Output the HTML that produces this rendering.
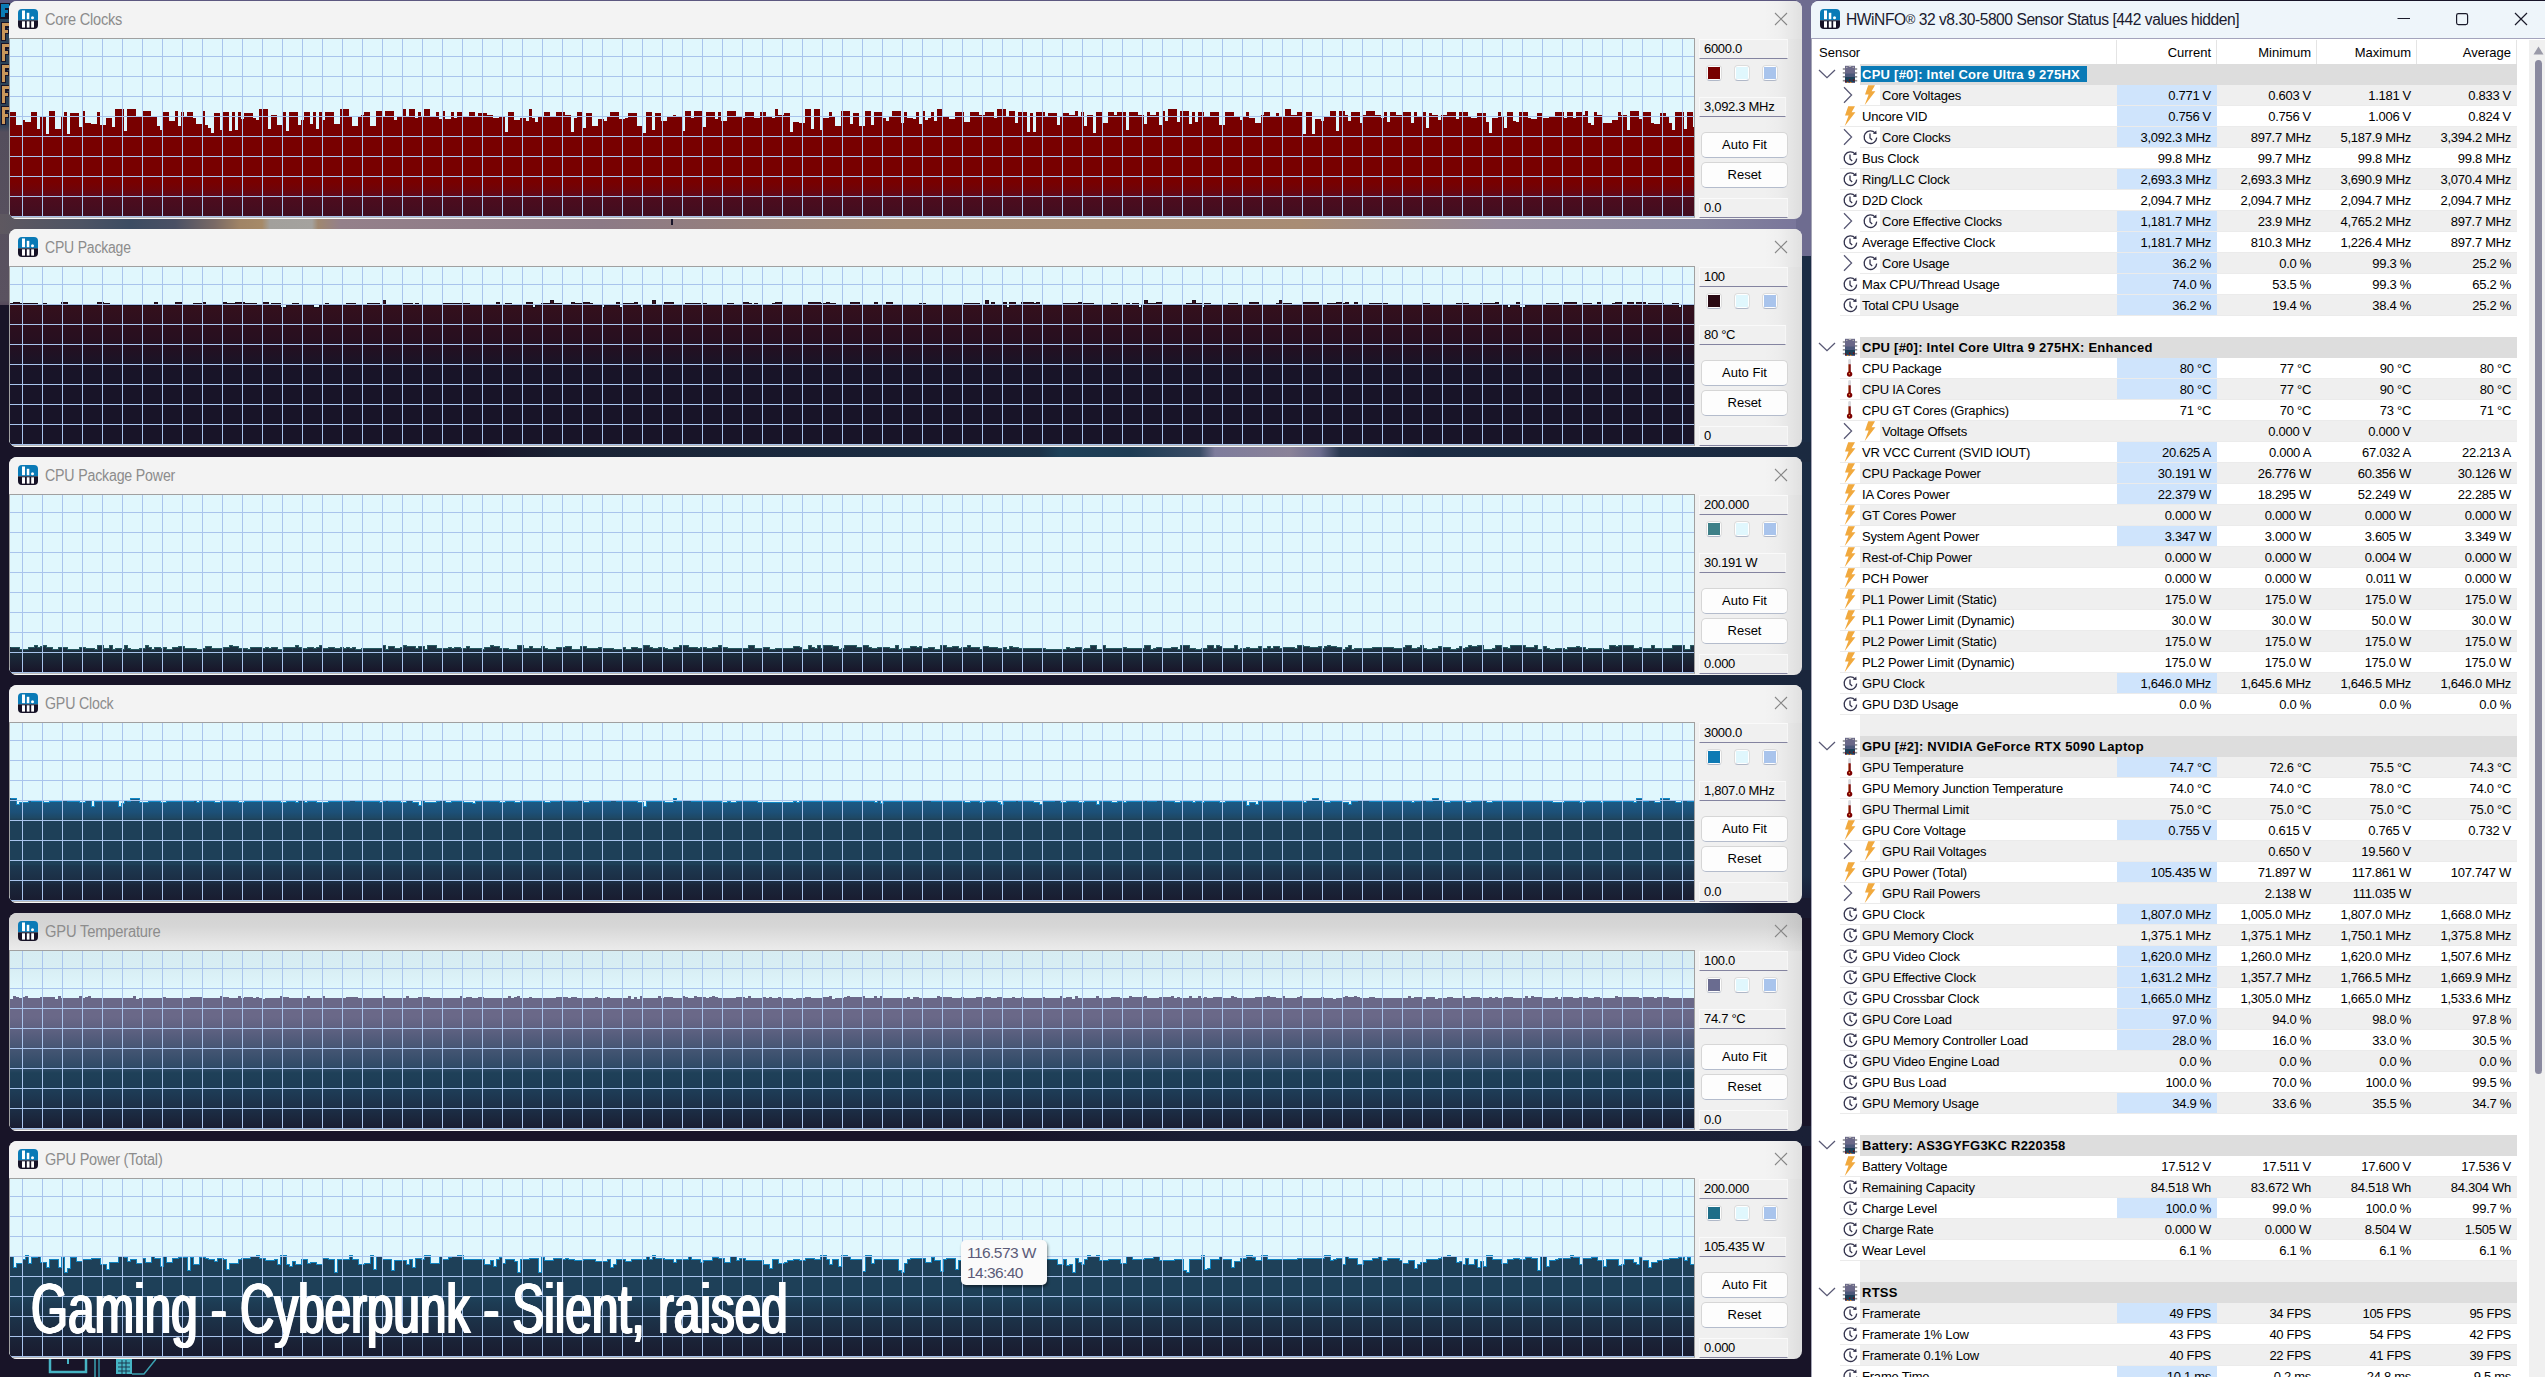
<!DOCTYPE html><html><head><meta charset="utf-8"><title>HWiNFO</title><style>
*{box-sizing:border-box;margin:0;padding:0}
html,body{width:2545px;height:1377px;overflow:hidden;background:#181428}
body{position:relative;font-family:"Liberation Sans",sans-serif;font-size:13px;color:#000}
.abs{position:absolute}
.pn{position:absolute;left:9px;width:1793px;height:218px;border-radius:8px;overflow:hidden;background:#f0f0f0}
.pn .tb{position:absolute;left:0;top:0;width:100%;height:38px;background:#f3f3f3}
.pn .tt{position:absolute;left:36px;top:9px;font-size:16px;line-height:20px;color:#8c8c8c;white-space:nowrap;letter-spacing:-0.2px}
.pn .ic{position:absolute;left:9px;top:8px}
.pn .cx{position:absolute;left:1765px;top:11px}
.pn .ch{position:absolute;left:0;top:37px;width:1686px;height:180px;border:1px solid #a0a0a0;border-bottom-color:#b8b8b8;background:#e0f7fd}
.pn .ch svg{position:absolute;left:0;top:0}
.pn .wl{position:absolute;left:0;top:217px;width:1700px;height:1px;background:#f8f8f8}
.pn .sh{position:absolute;left:1755px;top:0;width:38px;height:218px;background:linear-gradient(90deg,rgba(0,0,0,0) 0%,rgba(0,0,0,0.015) 40%,rgba(0,0,0,0.05) 75%,rgba(0,0,0,0.08) 100%)}
.eb{position:absolute;left:1690px;width:89px;height:20px;background:#f0f0f0;border-top:1px solid #fafafa;border-left:1px solid #f8f8f8;border-right:1px solid #f6f6f6;border-bottom:1px solid #8484a0;font-size:13px;line-height:18px;padding-left:4px;white-space:nowrap;color:#000;letter-spacing:-0.3px}
.eb.v{width:87px}
.bt{position:absolute;left:1692px;width:87px;height:26px;background:#fdfdfd;border:1px solid #d6d6d6;border-bottom-color:#b4bccc;border-radius:5px;font-size:13px;line-height:24px;text-align:center;color:#000}
.sw{position:absolute;top:64px;width:16px;height:16px;background:#fff;border:1px solid #dcdcdc;border-bottom-color:#b0b8c8;border-radius:4px}
.sw i{position:absolute;left:1px;top:1px;width:12px;height:12px;display:block}


.hw{position:absolute;left:1811px;top:1px;width:760px;height:1400px;background:#fff;border-radius:8px 0 0 0;overflow:hidden}
.hw .tb{position:absolute;left:0;top:0;width:100%;height:37px;background:#eef5fa}
.hw .tl{position:absolute;left:0;top:37px;width:100%;height:1px;background:#a4a4bc}
.hw .tt{position:absolute;left:35px;top:9px;font-size:15.6px;line-height:20px;color:#1a1a2e;white-space:nowrap;letter-spacing:-0.45px}
.hw .ic{position:absolute;left:9px;top:8px}
.hd{position:absolute;top:42px;height:20px;line-height:20px;font-size:13px;white-space:nowrap}
.hs{position:absolute;top:39px;width:1px;height:24px;background:#e4e4e4}
.r{position:absolute;left:0;width:706px;height:21px}
.r .bg{position:absolute;top:0;height:20px;right:0}
.r .ln{position:absolute;top:20px;height:1px;right:0;background:#ebebeb}
.r .nm{position:absolute;top:0;height:20px;line-height:22px;white-space:nowrap;letter-spacing:-0.2px}
.r .c{position:absolute;top:0;width:100px;height:20px;line-height:22px;text-align:right;padding-right:6px;white-space:nowrap;letter-spacing:-0.3px}
.r .c.hl{background:#cfe4fc}
.r svg{position:absolute}
.g .nm{font-weight:bold;letter-spacing:0.25px}

</style></head><body>
<div class="abs" style="left:0;top:0;width:12px;height:305px;background:linear-gradient(180deg,#2a4258 0,#2c4258 124px,#544e5c 132px,#5a5260 300px,#54485a 305px)"></div><svg class="abs" style="left:0;top:0" width="10" height="128" viewBox="0 0 10 128" shape-rendering="crispEdges"><rect x="0" y="2" width="10" height="17" fill="#161226"/><path d="M1,4H9V8H5V10H8V13H5V17H1Z" fill="#0a7ab6"/><path d="M1,22H10V28H7V29H10V34H6V41H1Z" fill="#181428"/><path d="M2,23H9V26H5V30H8V33H5V40H2Z" fill="#c8965a"/><path d="M1,43H10V49H7V50H10V55H6V62H1Z" fill="#181428"/><path d="M2,44H9V47H5V51H8V54H5V61H2Z" fill="#c8965a"/><path d="M1,64H10V70H7V71H10V76H6V83H1Z" fill="#181428"/><path d="M2,65H9V68H5V72H8V75H5V82H2Z" fill="#c8965a"/><path d="M1,85H10V91H7V92H10V97H6V104H1Z" fill="#181428"/><path d="M2,86H9V89H5V93H8V96H5V103H2Z" fill="#c8965a"/><path d="M1,106H10V112H7V113H10V118H6V125H1Z" fill="#181428"/><path d="M2,107H9V110H5V114H8V117H5V124H2Z" fill="#c8965a"/></svg><div class="abs" style="left:0;top:0;width:1830px;height:3px;background:#5c5880"></div><div class="abs" style="left:0;top:214px;width:1812px;height:20px;background:linear-gradient(90deg,#5e5860 0,#4e5464 80px,#3c4c62 130px,#4a5064 175px,#7a6a66 215px,#a08466 240px,#a68a68 262px,#a2a09c 270px,#a4a29e 312px,#a08870 318px,#94808a 340px,#8c7a86 600px,#a08672 900px,#a88c74 1300px,#94889a 1500px,#86849e 1700px,#77749a 1812px)"></div><div class="abs" style="left:671px;top:219px;width:2px;height:6px;background:#181428"></div><div class="abs" style="left:1796px;top:0;width:20px;height:256px;background:#6e6c90"></div><div class="abs" style="left:1796px;top:256px;width:20px;height:1000px;background:linear-gradient(180deg,#1a2c44 0,#1b2c44 620px,#19203a 640px,#181428 660px)"></div><div class="abs" style="left:0;top:442px;width:1812px;height:20px;background:linear-gradient(90deg,#181428 0,#181428 480px,#1a2234 560px,#1b2c42 900px,#1c3248 1040px,#1e4058 1060px,#1e3c54 1130px,#3a4c66 1200px,#7e7c9c 1215px,#8a8298 1290px,#6c6c8e 1320px,#2a3850 1340px,#1c2c44 1420px,#1b2a40 1812px)"></div><div class="abs" style="left:0;top:670px;width:1812px;height:20px;background:linear-gradient(90deg,#181428 0,#181428 900px,#19182e 1100px,#1a2238 1400px,#1a263c 1812px)"></div><div class="abs" style="left:0;top:898px;width:1812px;height:20px;background:linear-gradient(90deg,#181428 0,#181428 580px,#19203a 700px,#1b2a40 900px,#1b2a42 1700px,#191a30 1760px)"></div><div class="abs" style="left:0;top:1126px;width:1812px;height:20px;background:linear-gradient(90deg,#181428 0,#181428 1000px,#191e34 1200px,#1a2036 1812px)"></div><svg class="abs" style="left:40px;top:1356px" width="130" height="21" viewBox="0 0 130 21"><path d="M10,3V16H46V3" fill="none" stroke="#46b4c4" stroke-width="2.5"/><path d="M28,3V8" stroke="#46b4c4" stroke-width="2"/><path d="M55,3V21" stroke="#3aa0b0" stroke-width="1.5"/><path d="M59,3V21" stroke="#2a7084" stroke-width="2"/><rect x="76" y="3" width="16" height="15" fill="#46b4c4"/><path d="M78,7H90M78,11H90M78,15H90M82,4V18M86,4V18" stroke="#1a3a50" stroke-width="1"/><path d="M92,18H104L116,3" fill="none" stroke="#3aa0b0" stroke-width="1.5"/></svg>
<div class="pn" style="top:1px"><div class="tb"></div><div class="ic"><svg width="20" height="20" viewBox="0 0 20 20"><defs><clipPath id="hwc"><rect x="0" y="0" width="20" height="20" rx="4" ry="4"/></clipPath></defs><g clip-path="url(#hwc)"><rect width="20" height="11.3" fill="#0a7ab6"/><rect y="11.3" width="20" height="8.7" fill="#161226"/></g><rect x="4" y="1.5" width="3" height="8.7" fill="#fff"/><rect x="8.8" y="3.8" width="2.5" height="6.4" fill="#fff"/><circle cx="14.5" cy="8.7" r="1.5" fill="#fff"/><rect x="4" y="12.3" width="3" height="6.3" fill="#fff"/><rect x="8.8" y="12.3" width="2.7" height="6.3" fill="#fff"/><rect x="13.2" y="12.3" width="2.8" height="6.3" fill="#fff"/></svg></div><div class="tt"><span style="display:inline-block;transform-origin:0 50%;transform:scaleX(0.9086)">Core Clocks</span></div><svg class="cx" width="14" height="14" viewBox="0 0 14 14"><path d="M1,1L13,13M13,1L1,13" stroke="#8a8a8a" stroke-width="1.1" fill="none"/></svg><div class="ch"><svg width="1684" height="178" viewBox="0 0 1684 178" shape-rendering="crispEdges"><defs><linearGradient id="g0" gradientUnits="userSpaceOnUse" x1="0" y1="0" x2="0" y2="178"><stop offset="0.0000" stop-color="#780000"/><stop offset="0.8034" stop-color="#780000"/><stop offset="0.8427" stop-color="#700308"/><stop offset="0.8820" stop-color="#62081a"/><stop offset="0.8989" stop-color="#4c0c1e"/><stop offset="1.0000" stop-color="#400e20"/></linearGradient></defs><path d="M0,178V73H3V73H6V86H9V86H12V81H15V83H18V83H21V73H24V73H27V90H30V78H33V78H36V95H39V72H42V72H45V90H48V90H51V77H54V73H57V95H60V74H63V74H66V74H69V88H72V72H75V84H78V84H81V85H84V85H87V73H90V86H93V86H96V79H99V79H102V88H105V70H108V70H111V70H114V92H117V70H120V70H123V70H126V77H129V77H132V72H135V72H138V72H141V78H144V78H147V87H150V91H153V73H156V73H159V82H162V82H165V72H168V87H171V73H174V77H177V73H180V73H183V79H186V85H189V85H192V72H195V86H198V89H201V94H204V74H207V74H210V91H213V73H216V73H219V92H222V73H225V91H228V73H231V80H234V74H237V74H240V74H243V79H246V81H249V70H252V70H255V70H258V90H261V76H264V76H267V86H270V86H273V73H276V92H279V73H282V73H285V73H288V86H291V81H294V73H297V73H300V85H303V73H306V90H309V73H312V81H315V73H318V73H321V73H324V85H327V85H330V70H333V70H336V70H339V78H342V87H345V87H348V78H351V76H354V73H357V73H360V87H363V87H366V72H369V72H372V78H375V72H378V72H381V72H384V81H387V77H390V77H393V70H396V78H399V70H402V70H405V79H408V73H411V77H414V70H417V70H420V77H423V77H426V73H429V80H432V72H435V80H438V80H441V73H444V79H447V73H450V73H453V77H456V77H459V73H462V73H465V78H468V74H471V74H474V74H477V76H480V76H483V79H486V79H489V77H492V77H495V93H498V73H501V73H504V81H507V81H510V79H513V79H516V82H519V70H522V79H525V83H528V78H531V78H534V73H537V73H540V78H543V78H546V73H549V73H552V73H555V76H558V76H561V93H564V79H567V73H570V73H573V89H576V74H579V74H582V87H585V87H588V80H591V80H594V82H597V77H600V73H603V73H606V73H609V80H612V80H615V79H618V74H621V74H624V74H627V87H630V87H633V94H636V73H639V73H642V91H645V74H648V74H651V82H654V82H657V78H660V78H663V76H666V77H669V77H672V92H675V72H678V72H681V79H684V72H687V72H690V72H693V88H696V73H699V73H702V73H705V80H708V73H711V82H714V82H717V72H720V72H723V72H726V78H729V78H732V79H735V73H738V73H741V73H744V79H747V79H750V73H753V73H756V78H759V78H762V79H765V70H768V76H771V76H774V74H777V74H780V93H783V83H786V83H789V84H792V84H795V70H798V70H801V90H804V70H807V70H810V91H813V79H816V79H819V73H822V77H825V87H828V87H831V72H834V72H837V72H840V85H843V74H846V74H849V87H852V87H855V72H858V72H861V86H864V73H867V73H870V73H873V79H876V82H879V77H882V72H885V72H888V72H891V84H894V73H897V79H900V79H903V80H906V73H909V85H912V72H915V81H918V79H921V73H924V82H927V70H930V70H933V78H936V78H939V80H942V80H945V73H948V73H951V73H954V83H957V83H960V73H963V73H966V73H969V76H972V76H975V73H978V73H981V73H984V79H987V70H990V70H993V70H996V77H999V72H1002V72H1005V84H1008V73H1011V73H1014V73H1017V93H1020V74H1023V93H1026V73H1029V73H1032V73H1035V77H1038V74H1041V74H1044V74H1047V86H1050V78H1053V74H1056V74H1059V76H1062V76H1065V72H1068V77H1071V73H1074V87H1077V76H1080V76H1083V94H1086V73H1089V73H1092V84H1095V84H1098V73H1101V73H1104V76H1107V73H1110V73H1113V73H1116V91H1119V73H1122V73H1125V73H1128V76H1131V76H1134V85H1137V73H1140V76H1143V76H1146V73H1149V86H1152V72H1155V82H1158V70H1161V70H1164V70H1167V83H1170V72H1173V72H1176V72H1179V85H1182V73H1185V83H1188V73H1191V73H1194V78H1197V78H1200V73H1203V73H1206V73H1209V86H1212V86H1215V73H1218V73H1221V73H1224V78H1227V78H1230V81H1233V77H1236V73H1239V79H1242V79H1245V84H1248V84H1251V76H1254V73H1257V73H1260V78H1263V78H1266V74H1269V77H1272V77H1275V70H1278V70H1281V76H1284V76H1287V73H1290V73H1293V95H1296V73H1299V73H1302V95H1305V80H1308V80H1311V82H1314V78H1317V78H1320V72H1323V72H1326V92H1329V72H1332V72H1335V76H1338V82H1341V73H1344V73H1347V73H1350V84H1353V76H1356V72H1359V72H1362V72H1365V76H1368V76H1371V79H1374V73H1377V83H1380V73H1383V73H1386V76H1389V76H1392V73H1395V73H1398V73H1401V84H1404V73H1407V77H1410V77H1413V73H1416V89H1419V74H1422V76H1425V76H1428V81H1431V76H1434V76H1437V73H1440V73H1443V73H1446V80H1449V73H1452V73H1455V73H1458V77H1461V79H1464V79H1467V74H1470V74H1473V74H1476V83H1479V94H1482V79H1485V79H1488V73H1491V77H1494V89H1497V73H1500V73H1503V82H1506V83H1509V73H1512V73H1515V73H1518V79H1521V80H1524V80H1527V74H1530V74H1533V79H1536V79H1539V78H1542V78H1545V73H1548V73H1551V73H1554V79H1557V73H1560V73H1563V79H1566V73H1569V73H1572V76H1575V72H1578V84H1581V86H1584V73H1587V76H1590V76H1593V84H1596V84H1599V84H1602V81H1605V81H1608V73H1611V76H1614V76H1617V91H1620V72H1623V72H1626V72H1629V80H1632V73H1635V73H1638V73H1641V84H1644V85H1647V85H1650V74H1653V74H1656V77H1659V84H1662V91H1665V73H1668V73H1671V73H1674V90H1677V73H1680V73H1683V88H1684V178Z" fill="url(#g0)"/><path d="M12.5,0V178M32.5,0V178M52.5,0V178M72.5,0V178M92.5,0V178M112.5,0V178M132.5,0V178M152.5,0V178M172.5,0V178M192.5,0V178M212.5,0V178M232.5,0V178M252.5,0V178M272.5,0V178M292.5,0V178M312.5,0V178M332.5,0V178M352.5,0V178M372.5,0V178M392.5,0V178M412.5,0V178M432.5,0V178M452.5,0V178M472.5,0V178M492.5,0V178M512.5,0V178M532.5,0V178M552.5,0V178M572.5,0V178M592.5,0V178M612.5,0V178M632.5,0V178M652.5,0V178M672.5,0V178M692.5,0V178M712.5,0V178M732.5,0V178M752.5,0V178M772.5,0V178M792.5,0V178M812.5,0V178M832.5,0V178M852.5,0V178M872.5,0V178M892.5,0V178M912.5,0V178M932.5,0V178M952.5,0V178M972.5,0V178M992.5,0V178M1012.5,0V178M1032.5,0V178M1052.5,0V178M1072.5,0V178M1092.5,0V178M1112.5,0V178M1132.5,0V178M1152.5,0V178M1172.5,0V178M1192.5,0V178M1212.5,0V178M1232.5,0V178M1252.5,0V178M1272.5,0V178M1292.5,0V178M1312.5,0V178M1332.5,0V178M1352.5,0V178M1372.5,0V178M1392.5,0V178M1412.5,0V178M1432.5,0V178M1452.5,0V178M1472.5,0V178M1492.5,0V178M1512.5,0V178M1532.5,0V178M1552.5,0V178M1572.5,0V178M1592.5,0V178M1612.5,0V178M1632.5,0V178M1652.5,0V178M1672.5,0V178M0,17.5H1684M0,37.5H1684M0,57.5H1684M0,77.5H1684M0,97.5H1684M0,117.5H1684M0,137.5H1684M0,157.5H1684M0,177.5H1684" fill="none" stroke="#a9c4ec" stroke-width="1"/></svg></div><div class="wl"></div><div class="sh"></div><div class="eb" style="top:38px">6000.0</div><div class="sw" style="left:1697px"><i style="background:#780000"></i></div><div class="sw" style="left:1725px"><i style="background:#e0f7fd"></i></div><div class="sw" style="left:1753px"><i style="background:#a9c4ec"></i></div><div class="eb v" style="top:96px">3,092.3 MHz</div><div class="bt" style="top:131px">Auto Fit</div><div class="bt" style="top:161px">Reset</div><div class="eb" style="top:197px">0.0</div></div>
<div class="pn" style="top:229px"><div class="tb"></div><div class="ic"><svg width="20" height="20" viewBox="0 0 20 20"><defs><clipPath id="hwc"><rect x="0" y="0" width="20" height="20" rx="4" ry="4"/></clipPath></defs><g clip-path="url(#hwc)"><rect width="20" height="11.3" fill="#0a7ab6"/><rect y="11.3" width="20" height="8.7" fill="#161226"/></g><rect x="4" y="1.5" width="3" height="8.7" fill="#fff"/><rect x="8.8" y="3.8" width="2.5" height="6.4" fill="#fff"/><circle cx="14.5" cy="8.7" r="1.5" fill="#fff"/><rect x="4" y="12.3" width="3" height="6.3" fill="#fff"/><rect x="8.8" y="12.3" width="2.7" height="6.3" fill="#fff"/><rect x="13.2" y="12.3" width="2.8" height="6.3" fill="#fff"/></svg></div><div class="tt"><span style="display:inline-block;transform-origin:0 50%;transform:scaleX(0.8730)">CPU Package</span></div><svg class="cx" width="14" height="14" viewBox="0 0 14 14"><path d="M1,1L13,13M13,1L1,13" stroke="#8a8a8a" stroke-width="1.1" fill="none"/></svg><div class="ch"><svg width="1684" height="178" viewBox="0 0 1684 178" shape-rendering="crispEdges"><defs><linearGradient id="g1" gradientUnits="userSpaceOnUse" x1="0" y1="0" x2="0" y2="178"><stop offset="0.0000" stop-color="#34101c"/><stop offset="0.2135" stop-color="#34101c"/><stop offset="0.3090" stop-color="#2e0f1e"/><stop offset="0.4213" stop-color="#260f20"/><stop offset="0.5337" stop-color="#1c1326"/><stop offset="0.5899" stop-color="#181428"/><stop offset="1.0000" stop-color="#181428"/></linearGradient></defs><path d="M0,178V36H3V35H6V35H9V36H12V36H15V36H18V36H21V36H24V36H27V38H30V38H33V36H36V38H39V38H42V38H45V38H48V38H51V35H54V35H57V38H60V38H63V38H66V38H69V38H72V38H75V38H78V38H81V38H84V38H87V35H90V35H93V36H96V36H99V38H102V38H105V38H108V38H111V38H114V38H117V38H120V38H123V38H126V38H129V38H132V38H135V38H138V38H141V38H144V35H147V38H150V38H153V38H156V38H159V38H162V38H165V35H168V35H171V38H174V38H177V38H180V38H183V36H186V36H189V36H192V35H195V38H198V38H201V38H204V38H207V38H210V38H213V35H216V36H219V36H222V36H225V35H228V35H231V35H234V36H237V36H240V36H243V36H246V38H249V38H252V35H255V35H258V38H261V36H264V36H267V36H270V40H273V40H276V38H279V38H282V36H285V36H288V38H291V38H294V38H297V38H300V38H303V40H306V40H309V38H312V38H315V36H318V38H321V38H324V38H327V38H330V38H333V38H336V36H339V36H342V36H345V38H348V38H351V38H354V38H357V36H360V36H363V36H366V36H369V38H372V33H375V38H378V38H381V38H384V38H387V38H390V38H393V36H396V36H399V36H402V38H405V36H408V38H411V38H414V38H417V38H420V38H423V38H426V38H429V38H432V36H435V36H438V36H441V36H444V36H447V36H450V36H453V36H456V36H459V38H462V38H465V38H468V38H471V38H474V38H477V38H480V38H483V38H486V35H489V38H492V38H495V36H498V36H501V38H504V38H507V38H510V38H513V38H516V35H519V35H522V40H525V38H528V38H531V36H534V36H537V36H540V33H543V36H546V36H549V36H552V38H555V38H558V38H561V35H564V36H567V36H570V36H573V35H576V35H579V36H582V38H585V38H588V38H591V40H594V38H597V38H600V38H603V38H606V35H609V40H612V36H615V36H618V36H621V36H624V35H627V38H630V40H633V38H636V38H639V38H642V33H645V38H648V38H651V38H654V35H657V35H660V35H663V38H666V38H669V38H672V38H675V36H678V36H681V36H684V36H687V36H690V38H693V36H696V38H699V38H702V38H705V38H708V38H711V38H714V38H717V36H720V36H723V38H726V38H729V38H732V35H735V35H738V36H741V38H744V36H747V38H750V38H753V38H756V38H759V38H762V36H765V35H768V35H771V38H774V38H777V38H780V38H783V38H786V38H789V38H792V38H795V38H798V35H801V35H804V35H807V35H810V36H813V36H816V35H819V36H822V36H825V38H828V38H831V38H834V38H837V38H840V35H843V35H846V35H849V38H852V38H855V38H858V38H861V38H864V35H867V38H870V38H873V38H876V35H879V35H882V38H885V38H888V38H891V38H894V38H897V38H900V38H903V38H906V38H909V36H912V36H915V38H918V38H921V38H924V38H927V38H930V38H933V38H936V38H939V38H942V38H945V38H948V38H951V38H954V36H957V36H960V36H963V36H966V36H969V38H972V38H975V33H978V38H981V35H984V38H987V38H990V38H993V35H996V40H999V35H1002V35H1005V38H1008V38H1011V35H1014V35H1017V35H1020V35H1023V36H1026V35H1029V38H1032V38H1035V38H1038V38H1041V38H1044V38H1047V38H1050V38H1053V36H1056V36H1059V36H1062V36H1065V36H1068V35H1071V36H1074V36H1077V36H1080V36H1083V38H1086V38H1089V38H1092V38H1095V38H1098V38H1101V36H1104V36H1107V38H1110V38H1113V38H1116V36H1119V38H1122V36H1125V36H1128V40H1131V38H1134V33H1137V36H1140V36H1143V36H1146V35H1149V35H1152V38H1155V38H1158V38H1161V38H1164V38H1167V38H1170V38H1173V38H1176V36H1179V36H1182V33H1185V36H1188V36H1191V40H1194V36H1197V36H1200V38H1203V38H1206V38H1209V38H1212V38H1215V38H1218V36H1221V36H1224V36H1227V38H1230V38H1233V38H1236V38H1239V35H1242V35H1245V35H1248V38H1251V38H1254V38H1257V38H1260V38H1263V38H1266V36H1269V33H1272V36H1275V36H1278V36H1281V38H1284V38H1287V38H1290V38H1293V35H1296V35H1299V35H1302V35H1305V35H1308V38H1311V38H1314V38H1317V36H1320V36H1323V36H1326V35H1329V35H1332V36H1335V35H1338V38H1341V38H1344V35H1347V38H1350V38H1353V38H1356V38H1359V36H1362V36H1365V36H1368V36H1371V36H1374V36H1377V38H1380V38H1383V38H1386V38H1389V38H1392V38H1395V38H1398V38H1401V38H1404V38H1407V38H1410V38H1413V36H1416V36H1419V38H1422V38H1425V38H1428V38H1431V38H1434V38H1437V38H1440V38H1443V38H1446V36H1449V36H1452V36H1455V36H1458V38H1461V38H1464V38H1467V38H1470V36H1473V36H1476V36H1479V36H1482V36H1485V35H1488V38H1491V38H1494V38H1497V40H1500V38H1503V38H1506V35H1509V40H1512V40H1515V38H1518V38H1521V38H1524V38H1527V38H1530V38H1533V38H1536V36H1539V36H1542V36H1545V36H1548V38H1551V38H1554V35H1557V35H1560V35H1563V35H1566V38H1569V38H1572V36H1575V36H1578V36H1581V38H1584V38H1587V35H1590V38H1593V38H1596V38H1599V38H1602V36H1605V35H1608V35H1611V38H1614V38H1617V35H1620V35H1623V38H1626V35H1629V35H1632V35H1635V38H1638V36H1641V36H1644V36H1647V36H1650V36H1653V38H1656V38H1659V38H1662V36H1665V36H1668V40H1671V38H1674V38H1677V38H1680V38H1683V38H1684V178Z" fill="url(#g1)"/><path transform="translate(0.5,0.5)" d="M0,36H3V35H6V35H9V36H12V36H15V36H18V36H21V36H24V36H27V38H30V38H33V36H36V38H39V38H42V38H45V38H48V38H51V35H54V35H57V38H60V38H63V38H66V38H69V38H72V38H75V38H78V38H81V38H84V38H87V35H90V35H93V36H96V36H99V38H102V38H105V38H108V38H111V38H114V38H117V38H120V38H123V38H126V38H129V38H132V38H135V38H138V38H141V38H144V35H147V38H150V38H153V38H156V38H159V38H162V38H165V35H168V35H171V38H174V38H177V38H180V38H183V36H186V36H189V36H192V35H195V38H198V38H201V38H204V38H207V38H210V38H213V35H216V36H219V36H222V36H225V35H228V35H231V35H234V36H237V36H240V36H243V36H246V38H249V38H252V35H255V35H258V38H261V36H264V36H267V36H270V40H273V40H276V38H279V38H282V36H285V36H288V38H291V38H294V38H297V38H300V38H303V40H306V40H309V38H312V38H315V36H318V38H321V38H324V38H327V38H330V38H333V38H336V36H339V36H342V36H345V38H348V38H351V38H354V38H357V36H360V36H363V36H366V36H369V38H372V33H375V38H378V38H381V38H384V38H387V38H390V38H393V36H396V36H399V36H402V38H405V36H408V38H411V38H414V38H417V38H420V38H423V38H426V38H429V38H432V36H435V36H438V36H441V36H444V36H447V36H450V36H453V36H456V36H459V38H462V38H465V38H468V38H471V38H474V38H477V38H480V38H483V38H486V35H489V38H492V38H495V36H498V36H501V38H504V38H507V38H510V38H513V38H516V35H519V35H522V40H525V38H528V38H531V36H534V36H537V36H540V33H543V36H546V36H549V36H552V38H555V38H558V38H561V35H564V36H567V36H570V36H573V35H576V35H579V36H582V38H585V38H588V38H591V40H594V38H597V38H600V38H603V38H606V35H609V40H612V36H615V36H618V36H621V36H624V35H627V38H630V40H633V38H636V38H639V38H642V33H645V38H648V38H651V38H654V35H657V35H660V35H663V38H666V38H669V38H672V38H675V36H678V36H681V36H684V36H687V36H690V38H693V36H696V38H699V38H702V38H705V38H708V38H711V38H714V38H717V36H720V36H723V38H726V38H729V38H732V35H735V35H738V36H741V38H744V36H747V38H750V38H753V38H756V38H759V38H762V36H765V35H768V35H771V38H774V38H777V38H780V38H783V38H786V38H789V38H792V38H795V38H798V35H801V35H804V35H807V35H810V36H813V36H816V35H819V36H822V36H825V38H828V38H831V38H834V38H837V38H840V35H843V35H846V35H849V38H852V38H855V38H858V38H861V38H864V35H867V38H870V38H873V38H876V35H879V35H882V38H885V38H888V38H891V38H894V38H897V38H900V38H903V38H906V38H909V36H912V36H915V38H918V38H921V38H924V38H927V38H930V38H933V38H936V38H939V38H942V38H945V38H948V38H951V38H954V36H957V36H960V36H963V36H966V36H969V38H972V38H975V33H978V38H981V35H984V38H987V38H990V38H993V35H996V40H999V35H1002V35H1005V38H1008V38H1011V35H1014V35H1017V35H1020V35H1023V36H1026V35H1029V38H1032V38H1035V38H1038V38H1041V38H1044V38H1047V38H1050V38H1053V36H1056V36H1059V36H1062V36H1065V36H1068V35H1071V36H1074V36H1077V36H1080V36H1083V38H1086V38H1089V38H1092V38H1095V38H1098V38H1101V36H1104V36H1107V38H1110V38H1113V38H1116V36H1119V38H1122V36H1125V36H1128V40H1131V38H1134V33H1137V36H1140V36H1143V36H1146V35H1149V35H1152V38H1155V38H1158V38H1161V38H1164V38H1167V38H1170V38H1173V38H1176V36H1179V36H1182V33H1185V36H1188V36H1191V40H1194V36H1197V36H1200V38H1203V38H1206V38H1209V38H1212V38H1215V38H1218V36H1221V36H1224V36H1227V38H1230V38H1233V38H1236V38H1239V35H1242V35H1245V35H1248V38H1251V38H1254V38H1257V38H1260V38H1263V38H1266V36H1269V33H1272V36H1275V36H1278V36H1281V38H1284V38H1287V38H1290V38H1293V35H1296V35H1299V35H1302V35H1305V35H1308V38H1311V38H1314V38H1317V36H1320V36H1323V36H1326V35H1329V35H1332V36H1335V35H1338V38H1341V38H1344V35H1347V38H1350V38H1353V38H1356V38H1359V36H1362V36H1365V36H1368V36H1371V36H1374V36H1377V38H1380V38H1383V38H1386V38H1389V38H1392V38H1395V38H1398V38H1401V38H1404V38H1407V38H1410V38H1413V36H1416V36H1419V38H1422V38H1425V38H1428V38H1431V38H1434V38H1437V38H1440V38H1443V38H1446V36H1449V36H1452V36H1455V36H1458V38H1461V38H1464V38H1467V38H1470V36H1473V36H1476V36H1479V36H1482V36H1485V35H1488V38H1491V38H1494V38H1497V40H1500V38H1503V38H1506V35H1509V40H1512V40H1515V38H1518V38H1521V38H1524V38H1527V38H1530V38H1533V38H1536V36H1539V36H1542V36H1545V36H1548V38H1551V38H1554V35H1557V35H1560V35H1563V35H1566V38H1569V38H1572V36H1575V36H1578V36H1581V38H1584V38H1587V35H1590V38H1593V38H1596V38H1599V38H1602V36H1605V35H1608V35H1611V38H1614V38H1617V35H1620V35H1623V38H1626V35H1629V35H1632V35H1635V38H1638V36H1641V36H1644V36H1647V36H1650V36H1653V38H1656V38H1659V38H1662V36H1665V36H1668V40H1671V38H1674V38H1677V38H1680V38H1683V38H1684" fill="none" stroke="#1a0c18" stroke-width="1"/><path d="M12.5,0V178M32.5,0V178M52.5,0V178M72.5,0V178M92.5,0V178M112.5,0V178M132.5,0V178M152.5,0V178M172.5,0V178M192.5,0V178M212.5,0V178M232.5,0V178M252.5,0V178M272.5,0V178M292.5,0V178M312.5,0V178M332.5,0V178M352.5,0V178M372.5,0V178M392.5,0V178M412.5,0V178M432.5,0V178M452.5,0V178M472.5,0V178M492.5,0V178M512.5,0V178M532.5,0V178M552.5,0V178M572.5,0V178M592.5,0V178M612.5,0V178M632.5,0V178M652.5,0V178M672.5,0V178M692.5,0V178M712.5,0V178M732.5,0V178M752.5,0V178M772.5,0V178M792.5,0V178M812.5,0V178M832.5,0V178M852.5,0V178M872.5,0V178M892.5,0V178M912.5,0V178M932.5,0V178M952.5,0V178M972.5,0V178M992.5,0V178M1012.5,0V178M1032.5,0V178M1052.5,0V178M1072.5,0V178M1092.5,0V178M1112.5,0V178M1132.5,0V178M1152.5,0V178M1172.5,0V178M1192.5,0V178M1212.5,0V178M1232.5,0V178M1252.5,0V178M1272.5,0V178M1292.5,0V178M1312.5,0V178M1332.5,0V178M1352.5,0V178M1372.5,0V178M1392.5,0V178M1412.5,0V178M1432.5,0V178M1452.5,0V178M1472.5,0V178M1492.5,0V178M1512.5,0V178M1532.5,0V178M1552.5,0V178M1572.5,0V178M1592.5,0V178M1612.5,0V178M1632.5,0V178M1652.5,0V178M1672.5,0V178M0,17.5H1684M0,37.5H1684M0,57.5H1684M0,77.5H1684M0,97.5H1684M0,117.5H1684M0,137.5H1684M0,157.5H1684M0,177.5H1684" fill="none" stroke="#a9c4ec" stroke-width="1"/></svg></div><div class="wl"></div><div class="sh"></div><div class="eb" style="top:38px">100</div><div class="sw" style="left:1697px"><i style="background:#2a0a14"></i></div><div class="sw" style="left:1725px"><i style="background:#e0f7fd"></i></div><div class="sw" style="left:1753px"><i style="background:#a9c4ec"></i></div><div class="eb v" style="top:96px">80 °C</div><div class="bt" style="top:131px">Auto Fit</div><div class="bt" style="top:161px">Reset</div><div class="eb" style="top:197px">0</div></div>
<div class="pn" style="top:457px"><div class="tb"></div><div class="ic"><svg width="20" height="20" viewBox="0 0 20 20"><defs><clipPath id="hwc"><rect x="0" y="0" width="20" height="20" rx="4" ry="4"/></clipPath></defs><g clip-path="url(#hwc)"><rect width="20" height="11.3" fill="#0a7ab6"/><rect y="11.3" width="20" height="8.7" fill="#161226"/></g><rect x="4" y="1.5" width="3" height="8.7" fill="#fff"/><rect x="8.8" y="3.8" width="2.5" height="6.4" fill="#fff"/><circle cx="14.5" cy="8.7" r="1.5" fill="#fff"/><rect x="4" y="12.3" width="3" height="6.3" fill="#fff"/><rect x="8.8" y="12.3" width="2.7" height="6.3" fill="#fff"/><rect x="13.2" y="12.3" width="2.8" height="6.3" fill="#fff"/></svg></div><div class="tt"><span style="display:inline-block;transform-origin:0 50%;transform:scaleX(0.8859)">CPU Package Power</span></div><svg class="cx" width="14" height="14" viewBox="0 0 14 14"><path d="M1,1L13,13M13,1L1,13" stroke="#8a8a8a" stroke-width="1.1" fill="none"/></svg><div class="ch"><svg width="1684" height="178" viewBox="0 0 1684 178" shape-rendering="crispEdges"><defs><linearGradient id="g2" gradientUnits="userSpaceOnUse" x1="0" y1="0" x2="0" y2="178"><stop offset="0.0000" stop-color="#1c3444"/><stop offset="0.8427" stop-color="#1c3444"/><stop offset="0.8876" stop-color="#1b2c3c"/><stop offset="0.9551" stop-color="#191e30"/><stop offset="1.0000" stop-color="#181428"/></linearGradient></defs><path d="M0,178V152H3V152H6V152H9V154H12V154H15V154H18V152H21V152H24V150H27V152H30V151H33V150H36V152H39V152H42V154H45V154H48V152H51V152H54V152H57V154H60V154H63V154H66V154H69V152H72V152H75V153H78V153H81V153H84V154H87V150H90V150H93V153H96V153H99V150H102V154H105V153H108V153H111V154H114V150H117V153H120V154H123V154H126V154H129V153H132V153H135V150H138V152H141V154H144V152H147V152H150V153H153V152H156V154H159V154H162V152H165V152H168V151H171V151H174V153H177V153H180V153H183V153H186V154H189V154H192V153H195V151H198V151H201V153H204V153H207V153H210V153H213V152H216V152H219V150H222V151H225V151H228V153H231V153H234V153H237V154H240V152H243V152H246V152H249V152H252V153H255V152H258V153H261V152H264V152H267V154H270V154H273V152H276V152H279V152H282V152H285V150H288V152H291V153H294V153H297V152H300V152H303V153H306V152H309V150H312V153H315V153H318V152H321V152H324V153H327V153H330V152H333V153H336V152H339V153H342V152H345V154H348V154H351V153H354V153H357V153H360V153H363V153H366V153H369V153H372V150H375V154H378V151H381V151H384V153H387V153H390V152H393V150H396V151H399V151H402V151H405V153H408V151H411V151H414V154H417V150H420V150H423V150H426V153H429V153H432V153H435V153H438V152H441V153H444V152H447V152H450V153H453V153H456V151H459V153H462V153H465V153H468V153H471V154H474V152H477V152H480V150H483V151H486V151H489V153H492V153H495V153H498V154H501V154H504V154H507V150H510V150H513V153H516V153H519V151H522V153H525V153H528V153H531V151H534V153H537V154H540V154H543V154H546V152H549V152H552V152H555V151H558V151H561V154H564V154H567V154H570V151H573V151H576V153H579V153H582V153H585V153H588V152H591V153H594V153H597V153H600V153H603V154H606V154H609V154H612V152H615V154H618V154H621V152H624V152H627V153H630V153H633V150H636V150H639V152H642V153H645V153H648V152H651V152H654V153H657V154H660V154H663V152H666V152H669V150H672V150H675V150H678V152H681V152H684V152H687V153H690V152H693V152H696V153H699V153H702V152H705V152H708V150H711V152H714V152H717V153H720V153H723V153H726V153H729V153H732V153H735V153H738V150H741V150H744V153H747V153H750V153H753V152H756V152H759V154H762V154H765V153H768V153H771V153H774V153H777V153H780V153H783V151H786V151H789V152H792V154H795V154H798V150H801V152H804V153H807V150H810V153H813V150H816V150H819V150H822V151H825V151H828V154H831V153H834V150H837V150H840V150H843V150H846V152H849V152H852V150H855V150H858V152H861V153H864V153H867V152H870V152H873V152H876V152H879V153H882V153H885V150H888V154H891V153H894V153H897V153H900V151H903V151H906V152H909V151H912V153H915V153H918V152H921V152H924V154H927V154H930V150H933V150H936V152H939V152H942V151H945V151H948V153H951V152H954V152H957V150H960V152H963V152H966V152H969V154H972V151H975V151H978V152H981V152H984V152H987V153H990V153H993V152H996V154H999V151H1002V152H1005V152H1008V153H1011V153H1014V153H1017V153H1020V153H1023V153H1026V153H1029V153H1032V153H1035V154H1038V154H1041V154H1044V154H1047V154H1050V154H1053V154H1056V152H1059V153H1062V153H1065V152H1068V152H1071V154H1074V153H1077V153H1080V150H1083V150H1086V154H1089V154H1092V150H1095V153H1098V153H1101V153H1104V153H1107V153H1110V153H1113V152H1116V153H1119V153H1122V153H1125V153H1128V153H1131V153H1134V150H1137V150H1140V154H1143V153H1146V152H1149V152H1152V153H1155V153H1158V153H1161V152H1164V152H1167V154H1170V150H1173V150H1176V150H1179V153H1182V153H1185V154H1188V154H1191V153H1194V153H1197V150H1200V150H1203V153H1206V150H1209V151H1212V153H1215V153H1218V153H1221V153H1224V150H1227V154H1230V153H1233V153H1236V152H1239V153H1242V153H1245V153H1248V151H1251V153H1254V153H1257V151H1260V153H1263V151H1266V151H1269V153H1272V152H1275V152H1278V152H1281V152H1284V153H1287V150H1290V150H1293V151H1296V151H1299V152H1302V152H1305V152H1308V151H1311V153H1314V151H1317V150H1320V151H1323V151H1326V152H1329V152H1332V154H1335V152H1338V150H1341V154H1344V153H1347V153H1350V153H1353V153H1356V153H1359V153H1362V152H1365V152H1368V152H1371V152H1374V152H1377V152H1380V152H1383V153H1386V153H1389V153H1392V152H1395V150H1398V150H1401V153H1404V153H1407V152H1410V150H1413V153H1416V154H1419V154H1422V153H1425V153H1428V151H1431V152H1434V152H1437V152H1440V154H1443V154H1446V153H1449V151H1452V153H1455V152H1458V150H1461V151H1464V151H1467V150H1470V150H1473V154H1476V154H1479V154H1482V153H1485V150H1488V150H1491V152H1494V152H1497V153H1500V150H1503V150H1506V150H1509V150H1512V150H1515V152H1518V152H1521V152H1524V150H1527V154H1530V154H1533V151H1536V153H1539V154H1542V154H1545V153H1548V153H1551V153H1554V154H1557V152H1560V152H1563V152H1566V151H1569V152H1572V152H1575V154H1578V153H1581V153H1584V153H1587V153H1590V153H1593V154H1596V154H1599V150H1602V150H1605V151H1608V150H1611V150H1614V150H1617V150H1620V150H1623V153H1626V153H1629V152H1632V153H1635V153H1638V153H1641V150H1644V153H1647V153H1650V153H1653V153H1656V153H1659V153H1662V150H1665V150H1668V150H1671V150H1674V154H1677V154H1680V150H1683V150H1684V178Z" fill="url(#g2)"/><path transform="translate(0.5,0.5)" d="M0,152H3V152H6V152H9V154H12V154H15V154H18V152H21V152H24V150H27V152H30V151H33V150H36V152H39V152H42V154H45V154H48V152H51V152H54V152H57V154H60V154H63V154H66V154H69V152H72V152H75V153H78V153H81V153H84V154H87V150H90V150H93V153H96V153H99V150H102V154H105V153H108V153H111V154H114V150H117V153H120V154H123V154H126V154H129V153H132V153H135V150H138V152H141V154H144V152H147V152H150V153H153V152H156V154H159V154H162V152H165V152H168V151H171V151H174V153H177V153H180V153H183V153H186V154H189V154H192V153H195V151H198V151H201V153H204V153H207V153H210V153H213V152H216V152H219V150H222V151H225V151H228V153H231V153H234V153H237V154H240V152H243V152H246V152H249V152H252V153H255V152H258V153H261V152H264V152H267V154H270V154H273V152H276V152H279V152H282V152H285V150H288V152H291V153H294V153H297V152H300V152H303V153H306V152H309V150H312V153H315V153H318V152H321V152H324V153H327V153H330V152H333V153H336V152H339V153H342V152H345V154H348V154H351V153H354V153H357V153H360V153H363V153H366V153H369V153H372V150H375V154H378V151H381V151H384V153H387V153H390V152H393V150H396V151H399V151H402V151H405V153H408V151H411V151H414V154H417V150H420V150H423V150H426V153H429V153H432V153H435V153H438V152H441V153H444V152H447V152H450V153H453V153H456V151H459V153H462V153H465V153H468V153H471V154H474V152H477V152H480V150H483V151H486V151H489V153H492V153H495V153H498V154H501V154H504V154H507V150H510V150H513V153H516V153H519V151H522V153H525V153H528V153H531V151H534V153H537V154H540V154H543V154H546V152H549V152H552V152H555V151H558V151H561V154H564V154H567V154H570V151H573V151H576V153H579V153H582V153H585V153H588V152H591V153H594V153H597V153H600V153H603V154H606V154H609V154H612V152H615V154H618V154H621V152H624V152H627V153H630V153H633V150H636V150H639V152H642V153H645V153H648V152H651V152H654V153H657V154H660V154H663V152H666V152H669V150H672V150H675V150H678V152H681V152H684V152H687V153H690V152H693V152H696V153H699V153H702V152H705V152H708V150H711V152H714V152H717V153H720V153H723V153H726V153H729V153H732V153H735V153H738V150H741V150H744V153H747V153H750V153H753V152H756V152H759V154H762V154H765V153H768V153H771V153H774V153H777V153H780V153H783V151H786V151H789V152H792V154H795V154H798V150H801V152H804V153H807V150H810V153H813V150H816V150H819V150H822V151H825V151H828V154H831V153H834V150H837V150H840V150H843V150H846V152H849V152H852V150H855V150H858V152H861V153H864V153H867V152H870V152H873V152H876V152H879V153H882V153H885V150H888V154H891V153H894V153H897V153H900V151H903V151H906V152H909V151H912V153H915V153H918V152H921V152H924V154H927V154H930V150H933V150H936V152H939V152H942V151H945V151H948V153H951V152H954V152H957V150H960V152H963V152H966V152H969V154H972V151H975V151H978V152H981V152H984V152H987V153H990V153H993V152H996V154H999V151H1002V152H1005V152H1008V153H1011V153H1014V153H1017V153H1020V153H1023V153H1026V153H1029V153H1032V153H1035V154H1038V154H1041V154H1044V154H1047V154H1050V154H1053V154H1056V152H1059V153H1062V153H1065V152H1068V152H1071V154H1074V153H1077V153H1080V150H1083V150H1086V154H1089V154H1092V150H1095V153H1098V153H1101V153H1104V153H1107V153H1110V153H1113V152H1116V153H1119V153H1122V153H1125V153H1128V153H1131V153H1134V150H1137V150H1140V154H1143V153H1146V152H1149V152H1152V153H1155V153H1158V153H1161V152H1164V152H1167V154H1170V150H1173V150H1176V150H1179V153H1182V153H1185V154H1188V154H1191V153H1194V153H1197V150H1200V150H1203V153H1206V150H1209V151H1212V153H1215V153H1218V153H1221V153H1224V150H1227V154H1230V153H1233V153H1236V152H1239V153H1242V153H1245V153H1248V151H1251V153H1254V153H1257V151H1260V153H1263V151H1266V151H1269V153H1272V152H1275V152H1278V152H1281V152H1284V153H1287V150H1290V150H1293V151H1296V151H1299V152H1302V152H1305V152H1308V151H1311V153H1314V151H1317V150H1320V151H1323V151H1326V152H1329V152H1332V154H1335V152H1338V150H1341V154H1344V153H1347V153H1350V153H1353V153H1356V153H1359V153H1362V152H1365V152H1368V152H1371V152H1374V152H1377V152H1380V152H1383V153H1386V153H1389V153H1392V152H1395V150H1398V150H1401V153H1404V153H1407V152H1410V150H1413V153H1416V154H1419V154H1422V153H1425V153H1428V151H1431V152H1434V152H1437V152H1440V154H1443V154H1446V153H1449V151H1452V153H1455V152H1458V150H1461V151H1464V151H1467V150H1470V150H1473V154H1476V154H1479V154H1482V153H1485V150H1488V150H1491V152H1494V152H1497V153H1500V150H1503V150H1506V150H1509V150H1512V150H1515V152H1518V152H1521V152H1524V150H1527V154H1530V154H1533V151H1536V153H1539V154H1542V154H1545V153H1548V153H1551V153H1554V154H1557V152H1560V152H1563V152H1566V151H1569V152H1572V152H1575V154H1578V153H1581V153H1584V153H1587V153H1590V153H1593V154H1596V154H1599V150H1602V150H1605V151H1608V150H1611V150H1614V150H1617V150H1620V150H1623V153H1626V153H1629V152H1632V153H1635V153H1638V153H1641V150H1644V153H1647V153H1650V153H1653V153H1656V153H1659V153H1662V150H1665V150H1668V150H1671V150H1674V154H1677V154H1680V150H1683V150H1684" fill="none" stroke="#26585f" stroke-width="1"/><path d="M12.5,0V178M32.5,0V178M52.5,0V178M72.5,0V178M92.5,0V178M112.5,0V178M132.5,0V178M152.5,0V178M172.5,0V178M192.5,0V178M212.5,0V178M232.5,0V178M252.5,0V178M272.5,0V178M292.5,0V178M312.5,0V178M332.5,0V178M352.5,0V178M372.5,0V178M392.5,0V178M412.5,0V178M432.5,0V178M452.5,0V178M472.5,0V178M492.5,0V178M512.5,0V178M532.5,0V178M552.5,0V178M572.5,0V178M592.5,0V178M612.5,0V178M632.5,0V178M652.5,0V178M672.5,0V178M692.5,0V178M712.5,0V178M732.5,0V178M752.5,0V178M772.5,0V178M792.5,0V178M812.5,0V178M832.5,0V178M852.5,0V178M872.5,0V178M892.5,0V178M912.5,0V178M932.5,0V178M952.5,0V178M972.5,0V178M992.5,0V178M1012.5,0V178M1032.5,0V178M1052.5,0V178M1072.5,0V178M1092.5,0V178M1112.5,0V178M1132.5,0V178M1152.5,0V178M1172.5,0V178M1192.5,0V178M1212.5,0V178M1232.5,0V178M1252.5,0V178M1272.5,0V178M1292.5,0V178M1312.5,0V178M1332.5,0V178M1352.5,0V178M1372.5,0V178M1392.5,0V178M1412.5,0V178M1432.5,0V178M1452.5,0V178M1472.5,0V178M1492.5,0V178M1512.5,0V178M1532.5,0V178M1552.5,0V178M1572.5,0V178M1592.5,0V178M1612.5,0V178M1632.5,0V178M1652.5,0V178M1672.5,0V178M0,17.5H1684M0,37.5H1684M0,57.5H1684M0,77.5H1684M0,97.5H1684M0,117.5H1684M0,137.5H1684M0,157.5H1684M0,177.5H1684" fill="none" stroke="#a9c4ec" stroke-width="1"/></svg></div><div class="wl"></div><div class="sh"></div><div class="eb" style="top:38px">200.000</div><div class="sw" style="left:1697px"><i style="background:#3e8088"></i></div><div class="sw" style="left:1725px"><i style="background:#e0f7fd"></i></div><div class="sw" style="left:1753px"><i style="background:#a9c4ec"></i></div><div class="eb v" style="top:96px">30.191 W</div><div class="bt" style="top:131px">Auto Fit</div><div class="bt" style="top:161px">Reset</div><div class="eb" style="top:197px">0.000</div></div>
<div class="pn" style="top:685px"><div class="tb"></div><div class="ic"><svg width="20" height="20" viewBox="0 0 20 20"><defs><clipPath id="hwc"><rect x="0" y="0" width="20" height="20" rx="4" ry="4"/></clipPath></defs><g clip-path="url(#hwc)"><rect width="20" height="11.3" fill="#0a7ab6"/><rect y="11.3" width="20" height="8.7" fill="#161226"/></g><rect x="4" y="1.5" width="3" height="8.7" fill="#fff"/><rect x="8.8" y="3.8" width="2.5" height="6.4" fill="#fff"/><circle cx="14.5" cy="8.7" r="1.5" fill="#fff"/><rect x="4" y="12.3" width="3" height="6.3" fill="#fff"/><rect x="8.8" y="12.3" width="2.7" height="6.3" fill="#fff"/><rect x="13.2" y="12.3" width="2.8" height="6.3" fill="#fff"/></svg></div><div class="tt"><span style="display:inline-block;transform-origin:0 50%;transform:scaleX(0.8861)">GPU Clock</span></div><svg class="cx" width="14" height="14" viewBox="0 0 14 14"><path d="M1,1L13,13M13,1L1,13" stroke="#8a8a8a" stroke-width="1.1" fill="none"/></svg><div class="ch"><svg width="1684" height="178" viewBox="0 0 1684 178" shape-rendering="crispEdges"><defs><linearGradient id="g3" gradientUnits="userSpaceOnUse" x1="0" y1="0" x2="0" y2="178"><stop offset="0.0000" stop-color="#1b5a84"/><stop offset="0.4382" stop-color="#1b5a84"/><stop offset="0.5000" stop-color="#1c5078"/><stop offset="0.5337" stop-color="#1e4864"/><stop offset="0.5449" stop-color="#1e4058"/><stop offset="0.7921" stop-color="#1e4058"/><stop offset="0.8034" stop-color="#1d3850"/><stop offset="0.8989" stop-color="#1b2c42"/><stop offset="0.9101" stop-color="#1a263a"/><stop offset="1.0000" stop-color="#191c30"/></linearGradient></defs><path d="M0,178V75H3V75H6V81H9V79H12V79H15V79H18V77H21V78H24V78H27V78H30V78H33V79H36V79H39V78H42V78H45V78H48V78H51V77H54V77H57V78H60V78H63V78H66V78H69V79H72V79H75V77H78V77H81V83H84V78H87V78H90V78H93V78H96V78H99V78H102V78H105V78H108V83H111V80H114V77H117V78H120V75H123V75H126V75H129V79H132V79H135V79H138V78H141V78H144V78H147V78H150V79H153V79H156V78H159V78H162V78H165V78H168V78H171V78H174V78H177V78H180V78H183V77H186V79H189V78H192V78H195V78H198V78H201V78H204V79H207V79H210V78H213V78H216V78H219V78H222V78H225V78H228V79H231V79H234V78H237V78H240V78H243V78H246V78H249V78H252V78H255V78H258V78H261V78H264V78H267V78H270V79H273V79H276V78H279V78H282V78H285V79H288V77H291V77H294V79H297V78H300V78H303V78H306V79H309V79H312V79H315V79H318V78H321V78H324V78H327V78H330V78H333V78H336V78H339V77H342V77H345V78H348V78H351V78H354V78H357V78H360V78H363V78H366V78H369V79H372V78H375V77H378V78H381V78H384V78H387V78H390V79H393V79H396V77H399V77H402V79H405V79H408V82H411V77H414V79H417V79H420V79H423V79H426V78H429V77H432V77H435V79H438V79H441V78H444V78H447V78H450V78H453V79H456V79H459V79H462V80H465V78H468V78H471V78H474V78H477V78H480V78H483V78H486V78H489V79H492V79H495V78H498V78H501V78H504V79H507V79H510V78H513V78H516V78H519V78H522V78H525V78H528V78H531V78H534V79H537V79H540V78H543V78H546V78H549V77H552V77H555V78H558V78H561V78H564V78H567V77H570V77H573V79H576V79H579V78H582V78H585V78H588V78H591V78H594V78H597V78H600V77H603V77H606V78H609V78H612V78H615V78H618V78H621V78H624V78H627V79H630V79H633V83H636V78H639V78H642V78H645V78H648V78H651V78H654V79H657V79H660V79H663V75H666V78H669V78H672V77H675V77H678V77H681V78H684V78H687V78H690V78H693V78H696V78H699V78H702V78H705V78H708V78H711V79H714V79H717V78H720V79H723V79H726V78H729V78H732V78H735V78H738V78H741V78H744V78H747V79H750V79H753V79H756V79H759V79H762V79H765V79H768V79H771V79H774V79H777V79H780V79H783V78H786V79H789V78H792V78H795V78H798V78H801V78H804V78H807V78H810V78H813V78H816V78H819V78H822V78H825V78H828V78H831V78H834V78H837V78H840V78H843V78H846V78H849V78H852V78H855V78H858V78H861V78H864V79H867V77H870V80H873V78H876V78H879V78H882V78H885V78H888V78H891V78H894V78H897V78H900V78H903V78H906V78H909V78H912V77H915V77H918V77H921V78H924V78H927V78H930V78H933V78H936V78H939V78H942V78H945V78H948V78H951V78H954V79H957V79H960V78H963V78H966V78H969V79H972V79H975V78H978V78H981V78H984V78H987V79H990V81H993V78H996V78H999V78H1002V78H1005V77H1008V78H1011V78H1014V78H1017V78H1020V78H1023V79H1026V79H1029V81H1032V78H1035V78H1038V78H1041V78H1044V77H1047V77H1050V79H1053V79H1056V78H1059V78H1062V78H1065V78H1068V79H1071V79H1074V78H1077V78H1080V78H1083V78H1086V81H1089V78H1092V78H1095V78H1098V78H1101V79H1104V79H1107V78H1110V78H1113V79H1116V78H1119V78H1122V78H1125V78H1128V78H1131V78H1134V77H1137V78H1140V78H1143V78H1146V77H1149V77H1152V77H1155V78H1158V78H1161V78H1164V79H1167V79H1170V78H1173V78H1176V78H1179V78H1182V79H1185V78H1188V78H1191V79H1194V78H1197V78H1200V78H1203V78H1206V78H1209V79H1212V79H1215V78H1218V78H1221V78H1224V78H1227V78H1230V78H1233V78H1236V82H1239V79H1242V79H1245V81H1248V78H1251V78H1254V78H1257V78H1260V78H1263V78H1266V78H1269V77H1272V78H1275V78H1278V78H1281V78H1284V78H1287V78H1290V78H1293V79H1296V77H1299V77H1302V75H1305V75H1308V77H1311V77H1314V79H1317V79H1320V78H1323V78H1326V78H1329V78H1332V79H1335V79H1338V81H1341V78H1344V78H1347V77H1350V77H1353V77H1356V77H1359V78H1362V78H1365V78H1368V78H1371V78H1374V78H1377V78H1380V78H1383V78H1386V78H1389V78H1392V78H1395V78H1398V78H1401V79H1404V78H1407V78H1410V77H1413V77H1416V78H1419V78H1422V75H1425V75H1428V77H1431V77H1434V79H1437V79H1440V78H1443V78H1446V78H1449V78H1452V77H1455V79H1458V79H1461V78H1464V78H1467V78H1470V77H1473V77H1476V79H1479V79H1482V78H1485V78H1488V78H1491V78H1494V78H1497V78H1500V78H1503V78H1506V78H1509V78H1512V78H1515V78H1518V78H1521V78H1524V78H1527V78H1530V78H1533V78H1536V78H1539V78H1542V79H1545V79H1548V79H1551V79H1554V78H1557V78H1560V78H1563V78H1566V78H1569V79H1572V79H1575V78H1578V78H1581V78H1584V78H1587V78H1590V79H1593V78H1596V78H1599V78H1602V78H1605V78H1608V78H1611V78H1614V78H1617V78H1620V78H1623V79H1626V75H1629V75H1632V78H1635V78H1638V77H1641V77H1644V79H1647V79H1650V75H1653V75H1656V75H1659V77H1662V77H1665V79H1668V79H1671V77H1674V77H1677V78H1680V78H1683V78H1684V178Z" fill="url(#g3)"/><path transform="translate(0.5,0.5)" d="M0,75H3V75H6V81H9V79H12V79H15V79H18V77H21V78H24V78H27V78H30V78H33V79H36V79H39V78H42V78H45V78H48V78H51V77H54V77H57V78H60V78H63V78H66V78H69V79H72V79H75V77H78V77H81V83H84V78H87V78H90V78H93V78H96V78H99V78H102V78H105V78H108V83H111V80H114V77H117V78H120V75H123V75H126V75H129V79H132V79H135V79H138V78H141V78H144V78H147V78H150V79H153V79H156V78H159V78H162V78H165V78H168V78H171V78H174V78H177V78H180V78H183V77H186V79H189V78H192V78H195V78H198V78H201V78H204V79H207V79H210V78H213V78H216V78H219V78H222V78H225V78H228V79H231V79H234V78H237V78H240V78H243V78H246V78H249V78H252V78H255V78H258V78H261V78H264V78H267V78H270V79H273V79H276V78H279V78H282V78H285V79H288V77H291V77H294V79H297V78H300V78H303V78H306V79H309V79H312V79H315V79H318V78H321V78H324V78H327V78H330V78H333V78H336V78H339V77H342V77H345V78H348V78H351V78H354V78H357V78H360V78H363V78H366V78H369V79H372V78H375V77H378V78H381V78H384V78H387V78H390V79H393V79H396V77H399V77H402V79H405V79H408V82H411V77H414V79H417V79H420V79H423V79H426V78H429V77H432V77H435V79H438V79H441V78H444V78H447V78H450V78H453V79H456V79H459V79H462V80H465V78H468V78H471V78H474V78H477V78H480V78H483V78H486V78H489V79H492V79H495V78H498V78H501V78H504V79H507V79H510V78H513V78H516V78H519V78H522V78H525V78H528V78H531V78H534V79H537V79H540V78H543V78H546V78H549V77H552V77H555V78H558V78H561V78H564V78H567V77H570V77H573V79H576V79H579V78H582V78H585V78H588V78H591V78H594V78H597V78H600V77H603V77H606V78H609V78H612V78H615V78H618V78H621V78H624V78H627V79H630V79H633V83H636V78H639V78H642V78H645V78H648V78H651V78H654V79H657V79H660V79H663V75H666V78H669V78H672V77H675V77H678V77H681V78H684V78H687V78H690V78H693V78H696V78H699V78H702V78H705V78H708V78H711V79H714V79H717V78H720V79H723V79H726V78H729V78H732V78H735V78H738V78H741V78H744V78H747V79H750V79H753V79H756V79H759V79H762V79H765V79H768V79H771V79H774V79H777V79H780V79H783V78H786V79H789V78H792V78H795V78H798V78H801V78H804V78H807V78H810V78H813V78H816V78H819V78H822V78H825V78H828V78H831V78H834V78H837V78H840V78H843V78H846V78H849V78H852V78H855V78H858V78H861V78H864V79H867V77H870V80H873V78H876V78H879V78H882V78H885V78H888V78H891V78H894V78H897V78H900V78H903V78H906V78H909V78H912V77H915V77H918V77H921V78H924V78H927V78H930V78H933V78H936V78H939V78H942V78H945V78H948V78H951V78H954V79H957V79H960V78H963V78H966V78H969V79H972V79H975V78H978V78H981V78H984V78H987V79H990V81H993V78H996V78H999V78H1002V78H1005V77H1008V78H1011V78H1014V78H1017V78H1020V78H1023V79H1026V79H1029V81H1032V78H1035V78H1038V78H1041V78H1044V77H1047V77H1050V79H1053V79H1056V78H1059V78H1062V78H1065V78H1068V79H1071V79H1074V78H1077V78H1080V78H1083V78H1086V81H1089V78H1092V78H1095V78H1098V78H1101V79H1104V79H1107V78H1110V78H1113V79H1116V78H1119V78H1122V78H1125V78H1128V78H1131V78H1134V77H1137V78H1140V78H1143V78H1146V77H1149V77H1152V77H1155V78H1158V78H1161V78H1164V79H1167V79H1170V78H1173V78H1176V78H1179V78H1182V79H1185V78H1188V78H1191V79H1194V78H1197V78H1200V78H1203V78H1206V78H1209V79H1212V79H1215V78H1218V78H1221V78H1224V78H1227V78H1230V78H1233V78H1236V82H1239V79H1242V79H1245V81H1248V78H1251V78H1254V78H1257V78H1260V78H1263V78H1266V78H1269V77H1272V78H1275V78H1278V78H1281V78H1284V78H1287V78H1290V78H1293V79H1296V77H1299V77H1302V75H1305V75H1308V77H1311V77H1314V79H1317V79H1320V78H1323V78H1326V78H1329V78H1332V79H1335V79H1338V81H1341V78H1344V78H1347V77H1350V77H1353V77H1356V77H1359V78H1362V78H1365V78H1368V78H1371V78H1374V78H1377V78H1380V78H1383V78H1386V78H1389V78H1392V78H1395V78H1398V78H1401V79H1404V78H1407V78H1410V77H1413V77H1416V78H1419V78H1422V75H1425V75H1428V77H1431V77H1434V79H1437V79H1440V78H1443V78H1446V78H1449V78H1452V77H1455V79H1458V79H1461V78H1464V78H1467V78H1470V77H1473V77H1476V79H1479V79H1482V78H1485V78H1488V78H1491V78H1494V78H1497V78H1500V78H1503V78H1506V78H1509V78H1512V78H1515V78H1518V78H1521V78H1524V78H1527V78H1530V78H1533V78H1536V78H1539V78H1542V79H1545V79H1548V79H1551V79H1554V78H1557V78H1560V78H1563V78H1566V78H1569V79H1572V79H1575V78H1578V78H1581V78H1584V78H1587V78H1590V79H1593V78H1596V78H1599V78H1602V78H1605V78H1608V78H1611V78H1614V78H1617V78H1620V78H1623V79H1626V75H1629V75H1632V78H1635V78H1638V77H1641V77H1644V79H1647V79H1650V75H1653V75H1656V75H1659V77H1662V77H1665V79H1668V79H1671V77H1674V77H1677V78H1680V78H1683V78H1684" fill="none" stroke="#1088c6" stroke-width="1"/><path d="M12.5,0V178M32.5,0V178M52.5,0V178M72.5,0V178M92.5,0V178M112.5,0V178M132.5,0V178M152.5,0V178M172.5,0V178M192.5,0V178M212.5,0V178M232.5,0V178M252.5,0V178M272.5,0V178M292.5,0V178M312.5,0V178M332.5,0V178M352.5,0V178M372.5,0V178M392.5,0V178M412.5,0V178M432.5,0V178M452.5,0V178M472.5,0V178M492.5,0V178M512.5,0V178M532.5,0V178M552.5,0V178M572.5,0V178M592.5,0V178M612.5,0V178M632.5,0V178M652.5,0V178M672.5,0V178M692.5,0V178M712.5,0V178M732.5,0V178M752.5,0V178M772.5,0V178M792.5,0V178M812.5,0V178M832.5,0V178M852.5,0V178M872.5,0V178M892.5,0V178M912.5,0V178M932.5,0V178M952.5,0V178M972.5,0V178M992.5,0V178M1012.5,0V178M1032.5,0V178M1052.5,0V178M1072.5,0V178M1092.5,0V178M1112.5,0V178M1132.5,0V178M1152.5,0V178M1172.5,0V178M1192.5,0V178M1212.5,0V178M1232.5,0V178M1252.5,0V178M1272.5,0V178M1292.5,0V178M1312.5,0V178M1332.5,0V178M1352.5,0V178M1372.5,0V178M1392.5,0V178M1412.5,0V178M1432.5,0V178M1452.5,0V178M1472.5,0V178M1492.5,0V178M1512.5,0V178M1532.5,0V178M1552.5,0V178M1572.5,0V178M1592.5,0V178M1612.5,0V178M1632.5,0V178M1652.5,0V178M1672.5,0V178M0,17.5H1684M0,37.5H1684M0,57.5H1684M0,77.5H1684M0,97.5H1684M0,117.5H1684M0,137.5H1684M0,157.5H1684M0,177.5H1684" fill="none" stroke="#a9c4ec" stroke-width="1"/></svg></div><div class="wl"></div><div class="sh"></div><div class="eb" style="top:38px">3000.0</div><div class="sw" style="left:1697px"><i style="background:#0e7ab4"></i></div><div class="sw" style="left:1725px"><i style="background:#e0f7fd"></i></div><div class="sw" style="left:1753px"><i style="background:#a9c4ec"></i></div><div class="eb v" style="top:96px">1,807.0 MHz</div><div class="bt" style="top:131px">Auto Fit</div><div class="bt" style="top:161px">Reset</div><div class="eb" style="top:197px">0.0</div></div>
<div class="pn" style="top:913px"><div class="tb" style="background:linear-gradient(180deg,#d2d2d2 0%,#d6d6d6 35%,#e4e4e4 75%,#ececec 100%)"></div><div class="ic"><svg width="20" height="20" viewBox="0 0 20 20"><defs><clipPath id="hwc"><rect x="0" y="0" width="20" height="20" rx="4" ry="4"/></clipPath></defs><g clip-path="url(#hwc)"><rect width="20" height="11.3" fill="#0a7ab6"/><rect y="11.3" width="20" height="8.7" fill="#161226"/></g><rect x="4" y="1.5" width="3" height="8.7" fill="#fff"/><rect x="8.8" y="3.8" width="2.5" height="6.4" fill="#fff"/><circle cx="14.5" cy="8.7" r="1.5" fill="#fff"/><rect x="4" y="12.3" width="3" height="6.3" fill="#fff"/><rect x="8.8" y="12.3" width="2.7" height="6.3" fill="#fff"/><rect x="13.2" y="12.3" width="2.8" height="6.3" fill="#fff"/></svg></div><div class="tt"><span style="display:inline-block;transform-origin:0 50%;transform:scaleX(0.9198)">GPU Temperature</span></div><svg class="cx" width="14" height="14" viewBox="0 0 14 14"><path d="M1,1L13,13M13,1L1,13" stroke="#8a8a8a" stroke-width="1.1" fill="none"/></svg><div class="ch" style="background:linear-gradient(180deg,#d6ecf2 0,#d8eef4 18px,#e0f7fd 40px)"><svg width="1684" height="178" viewBox="0 0 1684 178" shape-rendering="crispEdges"><defs><linearGradient id="g4" gradientUnits="userSpaceOnUse" x1="0" y1="0" x2="0" y2="178"><stop offset="0.0000" stop-color="#6a6888"/><stop offset="0.3708" stop-color="#6a6888"/><stop offset="0.4494" stop-color="#5c6080"/><stop offset="0.5449" stop-color="#465674"/><stop offset="0.6573" stop-color="#2e4a66"/><stop offset="0.6854" stop-color="#1e4058"/><stop offset="0.7865" stop-color="#1e3c56"/><stop offset="0.8876" stop-color="#1c2e46"/><stop offset="0.9551" stop-color="#1a2439"/><stop offset="1.0000" stop-color="#191c30"/></linearGradient></defs><path d="M0,178V48H3V45H6V46H9V47H12V46H15V45H18V47H21V47H24V47H27V47H30V46H33V46H36V46H39V46H42V46H45V48H48V45H51V47H54V47H57V47H60V47H63V47H66V47H69V45H72V47H75V46H78V45H81V47H84V47H87V47H90V47H93V47H96V47H99V47H102V47H105V47H108V47H111V47H114V47H117V47H120V47H123V45H126V48H129V47H132V47H135V47H138V47H141V47H144V47H147V47H150V47H153V46H156V47H159V47H162V47H165V47H168V47H171V47H174V47H177V47H180V46H183V46H186V46H189V46H192V47H195V47H198V47H201V47H204V47H207V47H210V45H213V46H216V46H219V47H222V47H225V47H228V45H231V47H234V46H237V46H240V46H243V47H246V46H249V47H252V48H255V47H258V47H261V47H264V47H267V47H270V45H273V46H276V46H279V47H282V47H285V47H288V47H291V47H294V47H297V45H300V47H303V47H306V47H309V47H312V45H315V47H318V47H321V47H324V47H327V47H330V47H333V47H336V46H339V46H342V46H345V46H348V47H351V47H354V47H357V47H360V47H363V47H366V47H369V47H372V45H375V47H378V47H381V47H384V47H387V47H390V47H393V47H396V45H399V47H402V47H405V47H408V46H411V46H414V46H417V46H420V47H423V47H426V47H429V47H432V47H435V47H438V47H441V47H444V47H447V47H450V45H453V47H456V46H459V46H462V47H465V47H468V46H471V46H474V47H477V47H480V47H483V47H486V47H489V47H492V47H495V47H498V45H501V47H504V46H507V45H510V47H513V47H516V47H519V46H522V47H525V47H528V47H531V47H534V47H537V47H540V47H543V47H546V46H549V46H552V46H555V46H558V47H561V46H564V46H567V47H570V47H573V47H576V47H579V47H582V47H585V46H588V47H591V47H594V47H597V46H600V47H603V47H606V47H609V47H612V47H615V47H618V45H621V48H624V46H627V48H630V45H633V47H636V47H639V47H642V47H645V47H648V45H651V47H654V46H657V46H660V46H663V47H666V47H669V47H672V45H675V46H678V47H681V47H684V45H687V46H690V46H693V46H696V47H699V46H702V45H705V46H708V47H711V47H714V47H717V47H720V47H723V47H726V46H729V46H732V46H735V47H738V45H741V47H744V47H747V47H750V47H753V46H756V47H759V46H762V47H765V47H768V46H771V47H774V47H777V47H780V47H783V48H786V47H789V47H792V47H795V46H798V46H801V47H804V47H807V47H810V47H813V46H816V46H819V45H822V48H825V47H828V47H831V47H834V46H837V45H840V46H843V46H846V46H849V46H852V45H855V47H858V47H861V47H864V45H867V47H870V45H873V47H876V47H879V47H882V47H885V47H888V47H891V47H894V47H897V46H900V48H903V46H906V46H909V47H912V47H915V47H918V47H921V47H924V47H927V45H930V46H933V46H936V46H939V46H942V47H945V47H948V47H951V46H954V47H957V47H960V47H963V47H966V46H969V46H972V47H975V46H978V46H981V47H984V47H987V46H990V46H993V47H996V47H999V47H1002V46H1005V47H1008V47H1011V46H1014V47H1017V47H1020V47H1023V47H1026V47H1029V47H1032V46H1035V47H1038V47H1041V47H1044V47H1047V47H1050V45H1053V47H1056V46H1059V46H1062V48H1065V45H1068V47H1071V47H1074V47H1077V47H1080V47H1083V47H1086V45H1089V47H1092V47H1095V47H1098V47H1101V46H1104V46H1107V46H1110V47H1113V47H1116V47H1119V45H1122V46H1125V46H1128V46H1131V46H1134V45H1137V47H1140V47H1143V47H1146V47H1149V46H1152V46H1155V46H1158V46H1161V45H1164V47H1167V46H1170V47H1173V47H1176V47H1179V45H1182V47H1185V47H1188V45H1191V47H1194V46H1197V47H1200V47H1203V46H1206V46H1209V46H1212V47H1215V47H1218V47H1221V45H1224V46H1227V47H1230V47H1233V47H1236V47H1239V47H1242V47H1245V46H1248V46H1251V46H1254V46H1257V45H1260V46H1263V46H1266V47H1269V47H1272V45H1275V47H1278V47H1281V47H1284V47H1287V46H1290V45H1293V47H1296V47H1299V47H1302V47H1305V47H1308V47H1311V46H1314V47H1317V47H1320V47H1323V48H1326V47H1329V47H1332V46H1335V45H1338V46H1341V46H1344V45H1347V46H1350V47H1353V47H1356V47H1359V46H1362V46H1365V47H1368V47H1371V47H1374V47H1377V47H1380V47H1383V47H1386V47H1389V47H1392V47H1395V47H1398V45H1401V47H1404V46H1407V46H1410V46H1413V48H1416V46H1419V46H1422V46H1425V48H1428V47H1431V47H1434V47H1437V46H1440V46H1443V47H1446V47H1449V47H1452V45H1455V47H1458V47H1461V46H1464V46H1467V46H1470V47H1473V47H1476V47H1479V46H1482V47H1485V46H1488V47H1491V47H1494V46H1497V46H1500V46H1503V47H1506V47H1509V47H1512V47H1515V45H1518V47H1521V45H1524V46H1527V46H1530V46H1533V47H1536V47H1539V47H1542V47H1545V46H1548V48H1551V46H1554V46H1557V46H1560V46H1563V47H1566V47H1569V46H1572V46H1575V46H1578V47H1581V47H1584V46H1587V46H1590V47H1593V47H1596V47H1599V47H1602V47H1605V45H1608V46H1611V46H1614V46H1617V46H1620V46H1623V46H1626V46H1629V47H1632V46H1635V46H1638V46H1641V46H1644V47H1647V46H1650V46H1653V46H1656V46H1659V47H1662V47H1665V47H1668V47H1671V47H1674V47H1677V47H1680V47H1683V47H1684V178Z" fill="url(#g4)"/><path d="M12.5,0V178M32.5,0V178M52.5,0V178M72.5,0V178M92.5,0V178M112.5,0V178M132.5,0V178M152.5,0V178M172.5,0V178M192.5,0V178M212.5,0V178M232.5,0V178M252.5,0V178M272.5,0V178M292.5,0V178M312.5,0V178M332.5,0V178M352.5,0V178M372.5,0V178M392.5,0V178M412.5,0V178M432.5,0V178M452.5,0V178M472.5,0V178M492.5,0V178M512.5,0V178M532.5,0V178M552.5,0V178M572.5,0V178M592.5,0V178M612.5,0V178M632.5,0V178M652.5,0V178M672.5,0V178M692.5,0V178M712.5,0V178M732.5,0V178M752.5,0V178M772.5,0V178M792.5,0V178M812.5,0V178M832.5,0V178M852.5,0V178M872.5,0V178M892.5,0V178M912.5,0V178M932.5,0V178M952.5,0V178M972.5,0V178M992.5,0V178M1012.5,0V178M1032.5,0V178M1052.5,0V178M1072.5,0V178M1092.5,0V178M1112.5,0V178M1132.5,0V178M1152.5,0V178M1172.5,0V178M1192.5,0V178M1212.5,0V178M1232.5,0V178M1252.5,0V178M1272.5,0V178M1292.5,0V178M1312.5,0V178M1332.5,0V178M1352.5,0V178M1372.5,0V178M1392.5,0V178M1412.5,0V178M1432.5,0V178M1452.5,0V178M1472.5,0V178M1492.5,0V178M1512.5,0V178M1532.5,0V178M1552.5,0V178M1572.5,0V178M1592.5,0V178M1612.5,0V178M1632.5,0V178M1652.5,0V178M1672.5,0V178M0,17.5H1684M0,37.5H1684M0,57.5H1684M0,77.5H1684M0,97.5H1684M0,117.5H1684M0,137.5H1684M0,157.5H1684M0,177.5H1684" fill="none" stroke="#a9c4ec" stroke-width="1"/></svg></div><div class="wl"></div><div class="sh"></div><div class="eb" style="top:38px">100.0</div><div class="sw" style="left:1697px"><i style="background:#6a6c90"></i></div><div class="sw" style="left:1725px"><i style="background:#e0f7fd"></i></div><div class="sw" style="left:1753px"><i style="background:#a9c4ec"></i></div><div class="eb v" style="top:96px">74.7 °C</div><div class="bt" style="top:131px">Auto Fit</div><div class="bt" style="top:161px">Reset</div><div class="eb" style="top:197px">0.0</div></div>
<div class="pn" style="top:1141px"><div class="tb"></div><div class="ic"><svg width="20" height="20" viewBox="0 0 20 20"><defs><clipPath id="hwc"><rect x="0" y="0" width="20" height="20" rx="4" ry="4"/></clipPath></defs><g clip-path="url(#hwc)"><rect width="20" height="11.3" fill="#0a7ab6"/><rect y="11.3" width="20" height="8.7" fill="#161226"/></g><rect x="4" y="1.5" width="3" height="8.7" fill="#fff"/><rect x="8.8" y="3.8" width="2.5" height="6.4" fill="#fff"/><circle cx="14.5" cy="8.7" r="1.5" fill="#fff"/><rect x="4" y="12.3" width="3" height="6.3" fill="#fff"/><rect x="8.8" y="12.3" width="2.7" height="6.3" fill="#fff"/><rect x="13.2" y="12.3" width="2.8" height="6.3" fill="#fff"/></svg></div><div class="tt"><span style="display:inline-block;transform-origin:0 50%;transform:scaleX(0.9044)">GPU Power (Total)</span></div><svg class="cx" width="14" height="14" viewBox="0 0 14 14"><path d="M1,1L13,13M13,1L1,13" stroke="#8a8a8a" stroke-width="1.1" fill="none"/></svg><div class="ch"><svg width="1684" height="178" viewBox="0 0 1684 178" shape-rendering="crispEdges"><defs><linearGradient id="g5" gradientUnits="userSpaceOnUse" x1="0" y1="0" x2="0" y2="178"><stop offset="0.0000" stop-color="#1e4058"/><stop offset="0.6742" stop-color="#1e4058"/><stop offset="0.6966" stop-color="#1d3c54"/><stop offset="0.7865" stop-color="#1c3248"/><stop offset="0.8876" stop-color="#1b283e"/><stop offset="0.9101" stop-color="#1a2236"/><stop offset="1.0000" stop-color="#191b2f"/></linearGradient></defs><path d="M0,178V77H3V88H6V84H9V84H12V80H15V76H18V84H21V78H24V78H27V77H30V83H33V83H36V88H39V80H42V80H45V80H48V88H51V78H54V93H57V89H60V78H63V78H66V82H69V82H72V80H75V80H78V80H81V79H84V79H87V79H90V85H93V85H96V90H99V83H102V83H105V83H108V77H111V77H114V78H117V82H120V80H123V80H126V84H129V84H132V79H135V83H138V83H141V77H144V79H147V79H150V87H153V77H156V83H159V83H162V79H165V79H168V78H171V78H174V78H177V91H180V78H183V85H186V85H189V78H192V78H195V79H198V80H201V80H204V82H207V79H210V79H213V80H216V90H219V84H222V84H225V84H228V80H231V79H234V79H237V79H240V77H243V77H246V76H249V79H252V79H255V81H258V81H261V81H264V80H267V85H270V76H273V76H276V85H279V87H282V82H285V85H288V85H291V80H294V80H297V84H300V83H303V83H306V85H309V85H312V79H315V79H318V80H321V80H324V93H327V80H330V80H333V80H336V80H339V76H342V80H345V80H348V85H351V85H354V84H357V84H360V76H363V90H366V77H369V77H372V80H375V80H378V80H381V91H384V81H387V81H390V81H393V81H396V85H399V80H402V88H405V79H408V79H411V80H414V76H417V76H420V84H423V84H426V84H429V77H432V80H435V80H438V78H441V77H444V77H447V76H450V76H453V80H456V80H459V80H462V80H465V80H468V80H471V80H474V85H477V85H480V81H483V87H486V80H489V78H492V84H495V80H498V80H501V80H504V82H507V93H510V80H513V80H516V80H519V79H522V79H525V79H528V93H531V78H534V81H537V81H540V81H543V79H546V79H549V79H552V80H555V79H558V80H561V80H564V81H567V81H570V81H573V80H576V80H579V80H582V80H585V82H588V82H591V82H594V82H597V80H600V88H603V85H606V80H609V80H612V80H615V82H618V82H621V80H624V80H627V80H630V80H633V80H636V77H639V80H642V76H645V79H648V79H651V79H654V80H657V80H660V80H663V83H666V80H669V80H672V80H675V80H678V77H681V80H684V80H687V80H690V83H693V81H696V81H699V81H702V78H705V78H708V79H711V79H714V83H717V83H720V77H723V77H726V81H729V79H732V79H735V81H738V81H741V81H744V81H747V81H750V81H753V85H756V85H759V89H762V80H765V80H768V84H771V84H774V83H777V81H780V81H783V80H786V80H789V81H792V81H795V79H798V79H801V79H804V80H807V80H810V76H813V76H816V80H819V85H822V80H825V80H828V87H831V76H834V76H837V77H840V80H843V80H846V80H849V80H852V92H855V76H858V76H861V84H864V80H867V80H870V80H873V80H876V80H879V80H882V80H885V80H888V91H891V93H894V84H897V80H900V79H903V79H906V79H909V79H912V79H915V83H918V83H921V78H924V81H927V81H930V92H933V80H936V79H939V79H942V79H945V90H948V81H951V81H954V81H957V84H960V81H963V81H966V84H969V84H972V77H975V86H978V83H981V83H984V81H987V81H990V81H993V81H996V86H999V78H1002V78H1005V92H1008V80H1011V80H1014V76H1017V80H1020V93H1023V84H1026V80H1029V80H1032V80H1035V80H1038V80H1041V80H1044V80H1047V85H1050V85H1053V80H1056V86H1059V85H1062V93H1065V79H1068V83H1071V85H1074V80H1077V76H1080V77H1083V77H1086V76H1089V81H1092V81H1095V81H1098V80H1101V80H1104V80H1107V80H1110V84H1113V84H1116V77H1119V77H1122V80H1125V80H1128V80H1131V80H1134V79H1137V79H1140V79H1143V77H1146V77H1149V81H1152V81H1155V81H1158V81H1161V81H1164V80H1167V80H1170V80H1173V91H1176V93H1179V80H1182V80H1185V80H1188V80H1191V76H1194V90H1197V89H1200V80H1203V80H1206V80H1209V77H1212V80H1215V80H1218V80H1221V88H1224V82H1227V82H1230V79H1233V79H1236V76H1239V76H1242V78H1245V81H1248V81H1251V76H1254V76H1257V80H1260V80H1263V80H1266V80H1269V80H1272V80H1275V80H1278V80H1281V80H1284V80H1287V79H1290V79H1293V79H1296V79H1299V79H1302V79H1305V79H1308V79H1311V79H1314V76H1317V76H1320V81H1323V80H1326V79H1329V79H1332V85H1335V77H1338V79H1341V79H1344V79H1347V85H1350V85H1353V81H1356V81H1359V81H1362V79H1365V79H1368V77H1371V81H1374V81H1377V79H1380V79H1383V79H1386V79H1389V81H1392V84H1395V84H1398V81H1401V81H1404V89H1407V85H1410V83H1413V83H1416V80H1419V80H1422V80H1425V80H1428V79H1431V77H1434V77H1437V76H1440V77H1443V77H1446V83H1449V82H1452V85H1455V79H1458V85H1461V85H1464V80H1467V88H1470V82H1473V87H1476V76H1479V76H1482V80H1485V80H1488V80H1491V84H1494V84H1497V80H1500V80H1503V79H1506V79H1509V80H1512V80H1515V78H1518V78H1521V79H1524V79H1527V91H1530V77H1533V77H1536V87H1539V81H1542V81H1545V80H1548V79H1551V79H1554V79H1557V79H1560V76H1563V78H1566V78H1569V85H1572V79H1575V79H1578V79H1581V78H1584V78H1587V81H1590V81H1593V87H1596V80H1599V80H1602V80H1605V80H1608V86H1611V85H1614V80H1617V80H1620V80H1623V83H1626V85H1629V78H1632V81H1635V81H1638V88H1641V83H1644V83H1647V81H1650V81H1653V80H1656V80H1659V79H1662V79H1665V79H1668V78H1671V78H1674V81H1677V78H1680V85H1683V85H1684V178Z" fill="url(#g5)"/><path transform="translate(0.5,0.5)" d="M0,77H3V88H6V84H9V84H12V80H15V76H18V84H21V78H24V78H27V77H30V83H33V83H36V88H39V80H42V80H45V80H48V88H51V78H54V93H57V89H60V78H63V78H66V82H69V82H72V80H75V80H78V80H81V79H84V79H87V79H90V85H93V85H96V90H99V83H102V83H105V83H108V77H111V77H114V78H117V82H120V80H123V80H126V84H129V84H132V79H135V83H138V83H141V77H144V79H147V79H150V87H153V77H156V83H159V83H162V79H165V79H168V78H171V78H174V78H177V91H180V78H183V85H186V85H189V78H192V78H195V79H198V80H201V80H204V82H207V79H210V79H213V80H216V90H219V84H222V84H225V84H228V80H231V79H234V79H237V79H240V77H243V77H246V76H249V79H252V79H255V81H258V81H261V81H264V80H267V85H270V76H273V76H276V85H279V87H282V82H285V85H288V85H291V80H294V80H297V84H300V83H303V83H306V85H309V85H312V79H315V79H318V80H321V80H324V93H327V80H330V80H333V80H336V80H339V76H342V80H345V80H348V85H351V85H354V84H357V84H360V76H363V90H366V77H369V77H372V80H375V80H378V80H381V91H384V81H387V81H390V81H393V81H396V85H399V80H402V88H405V79H408V79H411V80H414V76H417V76H420V84H423V84H426V84H429V77H432V80H435V80H438V78H441V77H444V77H447V76H450V76H453V80H456V80H459V80H462V80H465V80H468V80H471V80H474V85H477V85H480V81H483V87H486V80H489V78H492V84H495V80H498V80H501V80H504V82H507V93H510V80H513V80H516V80H519V79H522V79H525V79H528V93H531V78H534V81H537V81H540V81H543V79H546V79H549V79H552V80H555V79H558V80H561V80H564V81H567V81H570V81H573V80H576V80H579V80H582V80H585V82H588V82H591V82H594V82H597V80H600V88H603V85H606V80H609V80H612V80H615V82H618V82H621V80H624V80H627V80H630V80H633V80H636V77H639V80H642V76H645V79H648V79H651V79H654V80H657V80H660V80H663V83H666V80H669V80H672V80H675V80H678V77H681V80H684V80H687V80H690V83H693V81H696V81H699V81H702V78H705V78H708V79H711V79H714V83H717V83H720V77H723V77H726V81H729V79H732V79H735V81H738V81H741V81H744V81H747V81H750V81H753V85H756V85H759V89H762V80H765V80H768V84H771V84H774V83H777V81H780V81H783V80H786V80H789V81H792V81H795V79H798V79H801V79H804V80H807V80H810V76H813V76H816V80H819V85H822V80H825V80H828V87H831V76H834V76H837V77H840V80H843V80H846V80H849V80H852V92H855V76H858V76H861V84H864V80H867V80H870V80H873V80H876V80H879V80H882V80H885V80H888V91H891V93H894V84H897V80H900V79H903V79H906V79H909V79H912V79H915V83H918V83H921V78H924V81H927V81H930V92H933V80H936V79H939V79H942V79H945V90H948V81H951V81H954V81H957V84H960V81H963V81H966V84H969V84H972V77H975V86H978V83H981V83H984V81H987V81H990V81H993V81H996V86H999V78H1002V78H1005V92H1008V80H1011V80H1014V76H1017V80H1020V93H1023V84H1026V80H1029V80H1032V80H1035V80H1038V80H1041V80H1044V80H1047V85H1050V85H1053V80H1056V86H1059V85H1062V93H1065V79H1068V83H1071V85H1074V80H1077V76H1080V77H1083V77H1086V76H1089V81H1092V81H1095V81H1098V80H1101V80H1104V80H1107V80H1110V84H1113V84H1116V77H1119V77H1122V80H1125V80H1128V80H1131V80H1134V79H1137V79H1140V79H1143V77H1146V77H1149V81H1152V81H1155V81H1158V81H1161V81H1164V80H1167V80H1170V80H1173V91H1176V93H1179V80H1182V80H1185V80H1188V80H1191V76H1194V90H1197V89H1200V80H1203V80H1206V80H1209V77H1212V80H1215V80H1218V80H1221V88H1224V82H1227V82H1230V79H1233V79H1236V76H1239V76H1242V78H1245V81H1248V81H1251V76H1254V76H1257V80H1260V80H1263V80H1266V80H1269V80H1272V80H1275V80H1278V80H1281V80H1284V80H1287V79H1290V79H1293V79H1296V79H1299V79H1302V79H1305V79H1308V79H1311V79H1314V76H1317V76H1320V81H1323V80H1326V79H1329V79H1332V85H1335V77H1338V79H1341V79H1344V79H1347V85H1350V85H1353V81H1356V81H1359V81H1362V79H1365V79H1368V77H1371V81H1374V81H1377V79H1380V79H1383V79H1386V79H1389V81H1392V84H1395V84H1398V81H1401V81H1404V89H1407V85H1410V83H1413V83H1416V80H1419V80H1422V80H1425V80H1428V79H1431V77H1434V77H1437V76H1440V77H1443V77H1446V83H1449V82H1452V85H1455V79H1458V85H1461V85H1464V80H1467V88H1470V82H1473V87H1476V76H1479V76H1482V80H1485V80H1488V80H1491V84H1494V84H1497V80H1500V80H1503V79H1506V79H1509V80H1512V80H1515V78H1518V78H1521V79H1524V79H1527V91H1530V77H1533V77H1536V87H1539V81H1542V81H1545V80H1548V79H1551V79H1554V79H1557V79H1560V76H1563V78H1566V78H1569V85H1572V79H1575V79H1578V79H1581V78H1584V78H1587V81H1590V81H1593V87H1596V80H1599V80H1602V80H1605V80H1608V86H1611V85H1614V80H1617V80H1620V80H1623V83H1626V85H1629V78H1632V81H1635V81H1638V88H1641V83H1644V83H1647V81H1650V81H1653V80H1656V80H1659V79H1662V79H1665V79H1668V78H1671V78H1674V81H1677V78H1680V85H1683V85H1684" fill="none" stroke="#1084c0" stroke-width="1"/><path d="M12.5,0V178M32.5,0V178M52.5,0V178M72.5,0V178M92.5,0V178M112.5,0V178M132.5,0V178M152.5,0V178M172.5,0V178M192.5,0V178M212.5,0V178M232.5,0V178M252.5,0V178M272.5,0V178M292.5,0V178M312.5,0V178M332.5,0V178M352.5,0V178M372.5,0V178M392.5,0V178M412.5,0V178M432.5,0V178M452.5,0V178M472.5,0V178M492.5,0V178M512.5,0V178M532.5,0V178M552.5,0V178M572.5,0V178M592.5,0V178M612.5,0V178M632.5,0V178M652.5,0V178M672.5,0V178M692.5,0V178M712.5,0V178M732.5,0V178M752.5,0V178M772.5,0V178M792.5,0V178M812.5,0V178M832.5,0V178M852.5,0V178M872.5,0V178M892.5,0V178M912.5,0V178M932.5,0V178M952.5,0V178M972.5,0V178M992.5,0V178M1012.5,0V178M1032.5,0V178M1052.5,0V178M1072.5,0V178M1092.5,0V178M1112.5,0V178M1132.5,0V178M1152.5,0V178M1172.5,0V178M1192.5,0V178M1212.5,0V178M1232.5,0V178M1252.5,0V178M1272.5,0V178M1292.5,0V178M1312.5,0V178M1332.5,0V178M1352.5,0V178M1372.5,0V178M1392.5,0V178M1412.5,0V178M1432.5,0V178M1452.5,0V178M1472.5,0V178M1492.5,0V178M1512.5,0V178M1532.5,0V178M1552.5,0V178M1572.5,0V178M1592.5,0V178M1612.5,0V178M1632.5,0V178M1652.5,0V178M1672.5,0V178M0,17.5H1684M0,37.5H1684M0,57.5H1684M0,77.5H1684M0,97.5H1684M0,117.5H1684M0,137.5H1684M0,157.5H1684M0,177.5H1684" fill="none" stroke="#a9c4ec" stroke-width="1"/></svg></div><div class="wl"></div><div class="sh"></div><div class="eb" style="top:38px">200.000</div><div class="sw" style="left:1697px"><i style="background:#1e6e88"></i></div><div class="sw" style="left:1725px"><i style="background:#e0f7fd"></i></div><div class="sw" style="left:1753px"><i style="background:#a9c4ec"></i></div><div class="eb v" style="top:96px">105.435 W</div><div class="bt" style="top:131px">Auto Fit</div><div class="bt" style="top:161px">Reset</div><div class="eb" style="top:197px">0.000</div></div>
<div class="abs" style="left:961px;top:1240px;width:86px;height:45px;background:#fafafa;border-radius:5px;box-shadow:1px 2px 3px rgba(0,0,0,0.45);font-size:15.5px;line-height:20px;color:#5a5a78;padding:3px 0 0 6px;white-space:nowrap;letter-spacing:-0.55px">116.573 W<br>14:36:40</div>
<div class="abs" id="big" style="left:31px;top:1264px;font-size:70px;line-height:90px;font-weight:normal;color:#fff;white-space:nowrap;transform-origin:0 0;transform:scaleX(0.68);text-shadow:0.8px 0 0 #fff,-0.8px 0 0 #fff,1.6px 0 0 #fff,-1.6px 0 0 #fff">Gaming - Cyberpunk - Silent, raised</div>
<div class="hw"><div class="tb"></div><div class="tl"></div><div class="abs" style="left:0;top:38px;width:1px;height:1400px;background:#a6a6b6"></div><div class="ic"><svg width="20" height="20" viewBox="0 0 20 20"><defs><clipPath id="hwc"><rect x="0" y="0" width="20" height="20" rx="4" ry="4"/></clipPath></defs><g clip-path="url(#hwc)"><rect width="20" height="11.3" fill="#0a7ab6"/><rect y="11.3" width="20" height="8.7" fill="#161226"/></g><rect x="4" y="1.5" width="3" height="8.7" fill="#fff"/><rect x="8.8" y="3.8" width="2.5" height="6.4" fill="#fff"/><circle cx="14.5" cy="8.7" r="1.5" fill="#fff"/><rect x="4" y="12.3" width="3" height="6.3" fill="#fff"/><rect x="8.8" y="12.3" width="2.7" height="6.3" fill="#fff"/><rect x="13.2" y="12.3" width="2.8" height="6.3" fill="#fff"/></svg></div><div class="tt">HWiNFO<span style="font-size:13px;position:relative;top:-1px">®</span> 32 v8.30-5800 Sensor Status [442 values hidden]</div><svg class="abs" style="left:586px;top:11px" width="14" height="14" viewBox="0 0 14 14"><path d="M0.5,6.5H13" stroke="#1a1a2a" stroke-width="1.1"/></svg><svg class="abs" style="left:644px;top:11px" width="14" height="14" viewBox="0 0 14 14"><rect x="1.6" y="1.6" width="11" height="11" rx="1.8" fill="none" stroke="#1a1a2a" stroke-width="1.2"/></svg><svg class="abs" style="left:703px;top:11px" width="14" height="14" viewBox="0 0 14 14"><path d="M1,1L13,13M13,1L1,13" stroke="#1a1a2a" stroke-width="1.2" fill="none"/></svg><div class="hd" style="left:8px">Sensor</div><div class="hd" style="left:306px;width:100px;text-align:right;padding-right:6px">Current</div><div class="hd" style="left:406px;width:100px;text-align:right;padding-right:6px">Minimum</div><div class="hd" style="left:506px;width:100px;text-align:right;padding-right:6px">Maximum</div><div class="hd" style="left:606px;width:100px;text-align:right;padding-right:6px">Average</div><div class="hs" style="left:305px"></div><div class="hs" style="left:405px"></div><div class="hs" style="left:505px"></div><div class="hs" style="left:605px"></div><div class="hs" style="left:705px"></div><div class="abs" style="left:718px;top:39px;width:20px;height:1400px;background:#f0f0f0"></div><svg class="abs" style="left:722px;top:45px" width="11" height="9" viewBox="0 0 11 9"><path d="M0.5,8.5L5.5,0.5L10.5,8.5Z" fill="#9a9aa8"/></svg><div class="abs" style="left:724px;top:59px;width:7px;height:1014px;border-radius:3.5px;background:#8a8aa0"></div><div class="r g" style="top:63px"><div class="bg" style="left:49px;background:#dddddd;height:21px"></div><svg style="left:7px;top:5px" width="18" height="10" viewBox="0 0 18 10"><path d="M1,1L9,8.6L17,1" fill="none" stroke="#585874" stroke-width="1.3"/></svg><svg style="left:31px;top:1px" width="16" height="19" viewBox="0 0 16 19"><rect x="0.8" y="3.2" width="2.4" height="1.6" fill="#8c8c90"/><rect x="12.8" y="3.2" width="2.4" height="1.6" fill="#8c8c90"/><rect x="0.8" y="7.1" width="2.4" height="1.6" fill="#8c8c90"/><rect x="12.8" y="7.1" width="2.4" height="1.6" fill="#8c8c90"/><rect x="0.8" y="11.0" width="2.4" height="1.6" fill="#8c8c90"/><rect x="12.8" y="11.0" width="2.4" height="1.6" fill="#8c8c90"/><rect x="0.8" y="14.9" width="2.4" height="1.6" fill="#8c8c90"/><rect x="12.8" y="14.9" width="2.4" height="1.6" fill="#8c8c90"/><rect x="3" y="0.8" width="10" height="17.2" fill="#6a6888"/><rect x="3" y="8.5" width="10" height="3.5" fill="#4c587a"/><rect x="3" y="12" width="10" height="5.2" fill="#1e4058"/><rect x="3" y="17.2" width="10" height="0.8" fill="#5a5a84"/><rect x="6.8" y="0.8" width="2.4" height="1" fill="#c8c8c0"/><rect x="4.2" y="1.8" width="1.2" height="1.2" fill="#b8b8b4"/><rect x="10.6" y="1.8" width="1.2" height="1.2" fill="#b8b8b4"/><rect x="7" y="14.5" width="1.3" height="1.3" fill="#900000"/><rect x="11" y="14.5" width="1.3" height="1.3" fill="#900000"/><rect x="3" y="15.6" width="1.2" height="1.2" fill="#900000"/><rect x="5" y="16.9" width="1.4" height="1.1" fill="#e09020"/><rect x="8" y="16.9" width="1.4" height="1.1" fill="#e09020"/></svg><div class="abs" style="left:50px;top:2px;width:226px;height:16px;background:#0a7ab6"></div><div class="nm" style="left:51px;color:#fff">CPU [#0]: Intel Core Ultra 9 275HX</div></div><div class="r" style="top:84px"><div class="bg" style="left:69px;background:#efefef"></div><div class="ln" style="left:49px"></div><svg style="left:32px;top:1px" width="10" height="18" viewBox="0 0 10 18"><path d="M1,1.2L8.6,9L1,16.8" fill="none" stroke="#585874" stroke-width="1.25"/></svg><svg style="left:53px;top:0px" width="13" height="21" viewBox="0 0 13 21"><path d="M4.2,0.3L11.0,0.3L7.6,6.3L11.4,6.3L0.6,20.3L4.6,9.6L1.0,9.6Z" fill="#f1a93e"/></svg><div class="nm" style="left:71px">Core Voltages</div><div class="c hl" style="left:306px">0.771 V</div><div class="c" style="left:406px">0.603 V</div><div class="c" style="left:506px">1.181 V</div><div class="c" style="left:606px">0.833 V</div></div><div class="r" style="top:105px"><div class="ln" style="left:29px"></div><svg style="left:33px;top:0px" width="13" height="21" viewBox="0 0 13 21"><path d="M4.2,0.3L11.0,0.3L7.6,6.3L11.4,6.3L0.6,20.3L4.6,9.6L1.0,9.6Z" fill="#f1a93e"/></svg><div class="nm" style="left:51px">Uncore VID</div><div class="c hl" style="left:306px">0.756 V</div><div class="c" style="left:406px">0.756 V</div><div class="c" style="left:506px">1.006 V</div><div class="c" style="left:606px">0.824 V</div></div><div class="r" style="top:126px"><div class="bg" style="left:69px;background:#efefef"></div><div class="ln" style="left:49px"></div><svg style="left:32px;top:1px" width="10" height="18" viewBox="0 0 10 18"><path d="M1,1.2L8.6,9L1,16.8" fill="none" stroke="#585874" stroke-width="1.25"/></svg><svg style="left:51px;top:2px" width="17" height="17" viewBox="0 0 17 17"><path d="M13.2,4.1A6.3,6.3 0 1 0 14.7,8.6" fill="none" stroke="#34344e" stroke-width="1.3"/><path d="M10.8,4.7L14.6,5.0L14.3,1.5Z" fill="#34344e"/><path d="M8.0,4.6V9.0L10.2,11.0" fill="none" stroke="#34344e" stroke-width="1.3"/></svg><div class="nm" style="left:71px">Core Clocks</div><div class="c hl" style="left:306px">3,092.3 MHz</div><div class="c" style="left:406px">897.7 MHz</div><div class="c" style="left:506px">5,187.9 MHz</div><div class="c" style="left:606px">3,394.2 MHz</div></div><div class="r" style="top:147px"><div class="ln" style="left:29px"></div><svg style="left:31px;top:2px" width="17" height="17" viewBox="0 0 17 17"><path d="M13.2,4.1A6.3,6.3 0 1 0 14.7,8.6" fill="none" stroke="#34344e" stroke-width="1.3"/><path d="M10.8,4.7L14.6,5.0L14.3,1.5Z" fill="#34344e"/><path d="M8.0,4.6V9.0L10.2,11.0" fill="none" stroke="#34344e" stroke-width="1.3"/></svg><div class="nm" style="left:51px">Bus Clock</div><div class="c" style="left:306px">99.8 MHz</div><div class="c" style="left:406px">99.7 MHz</div><div class="c" style="left:506px">99.8 MHz</div><div class="c" style="left:606px">99.8 MHz</div></div><div class="r" style="top:168px"><div class="bg" style="left:49px;background:#efefef"></div><div class="ln" style="left:29px"></div><svg style="left:31px;top:2px" width="17" height="17" viewBox="0 0 17 17"><path d="M13.2,4.1A6.3,6.3 0 1 0 14.7,8.6" fill="none" stroke="#34344e" stroke-width="1.3"/><path d="M10.8,4.7L14.6,5.0L14.3,1.5Z" fill="#34344e"/><path d="M8.0,4.6V9.0L10.2,11.0" fill="none" stroke="#34344e" stroke-width="1.3"/></svg><div class="nm" style="left:51px">Ring/LLC Clock</div><div class="c hl" style="left:306px">2,693.3 MHz</div><div class="c" style="left:406px">2,693.3 MHz</div><div class="c" style="left:506px">3,690.9 MHz</div><div class="c" style="left:606px">3,070.4 MHz</div></div><div class="r" style="top:189px"><div class="ln" style="left:29px"></div><svg style="left:31px;top:2px" width="17" height="17" viewBox="0 0 17 17"><path d="M13.2,4.1A6.3,6.3 0 1 0 14.7,8.6" fill="none" stroke="#34344e" stroke-width="1.3"/><path d="M10.8,4.7L14.6,5.0L14.3,1.5Z" fill="#34344e"/><path d="M8.0,4.6V9.0L10.2,11.0" fill="none" stroke="#34344e" stroke-width="1.3"/></svg><div class="nm" style="left:51px">D2D Clock</div><div class="c" style="left:306px">2,094.7 MHz</div><div class="c" style="left:406px">2,094.7 MHz</div><div class="c" style="left:506px">2,094.7 MHz</div><div class="c" style="left:606px">2,094.7 MHz</div></div><div class="r" style="top:210px"><div class="bg" style="left:69px;background:#efefef"></div><div class="ln" style="left:49px"></div><svg style="left:32px;top:1px" width="10" height="18" viewBox="0 0 10 18"><path d="M1,1.2L8.6,9L1,16.8" fill="none" stroke="#585874" stroke-width="1.25"/></svg><svg style="left:51px;top:2px" width="17" height="17" viewBox="0 0 17 17"><path d="M13.2,4.1A6.3,6.3 0 1 0 14.7,8.6" fill="none" stroke="#34344e" stroke-width="1.3"/><path d="M10.8,4.7L14.6,5.0L14.3,1.5Z" fill="#34344e"/><path d="M8.0,4.6V9.0L10.2,11.0" fill="none" stroke="#34344e" stroke-width="1.3"/></svg><div class="nm" style="left:71px">Core Effective Clocks</div><div class="c hl" style="left:306px">1,181.7 MHz</div><div class="c" style="left:406px">23.9 MHz</div><div class="c" style="left:506px">4,765.2 MHz</div><div class="c" style="left:606px">897.7 MHz</div></div><div class="r" style="top:231px"><div class="ln" style="left:29px"></div><svg style="left:31px;top:2px" width="17" height="17" viewBox="0 0 17 17"><path d="M13.2,4.1A6.3,6.3 0 1 0 14.7,8.6" fill="none" stroke="#34344e" stroke-width="1.3"/><path d="M10.8,4.7L14.6,5.0L14.3,1.5Z" fill="#34344e"/><path d="M8.0,4.6V9.0L10.2,11.0" fill="none" stroke="#34344e" stroke-width="1.3"/></svg><div class="nm" style="left:51px">Average Effective Clock</div><div class="c hl" style="left:306px">1,181.7 MHz</div><div class="c" style="left:406px">810.3 MHz</div><div class="c" style="left:506px">1,226.4 MHz</div><div class="c" style="left:606px">897.7 MHz</div></div><div class="r" style="top:252px"><div class="bg" style="left:69px;background:#efefef"></div><div class="ln" style="left:49px"></div><svg style="left:32px;top:1px" width="10" height="18" viewBox="0 0 10 18"><path d="M1,1.2L8.6,9L1,16.8" fill="none" stroke="#585874" stroke-width="1.25"/></svg><svg style="left:51px;top:2px" width="17" height="17" viewBox="0 0 17 17"><path d="M13.2,4.1A6.3,6.3 0 1 0 14.7,8.6" fill="none" stroke="#34344e" stroke-width="1.3"/><path d="M10.8,4.7L14.6,5.0L14.3,1.5Z" fill="#34344e"/><path d="M8.0,4.6V9.0L10.2,11.0" fill="none" stroke="#34344e" stroke-width="1.3"/></svg><div class="nm" style="left:71px">Core Usage</div><div class="c hl" style="left:306px">36.2 %</div><div class="c" style="left:406px">0.0 %</div><div class="c" style="left:506px">99.3 %</div><div class="c" style="left:606px">25.2 %</div></div><div class="r" style="top:273px"><div class="ln" style="left:29px"></div><svg style="left:31px;top:2px" width="17" height="17" viewBox="0 0 17 17"><path d="M13.2,4.1A6.3,6.3 0 1 0 14.7,8.6" fill="none" stroke="#34344e" stroke-width="1.3"/><path d="M10.8,4.7L14.6,5.0L14.3,1.5Z" fill="#34344e"/><path d="M8.0,4.6V9.0L10.2,11.0" fill="none" stroke="#34344e" stroke-width="1.3"/></svg><div class="nm" style="left:51px">Max CPU/Thread Usage</div><div class="c hl" style="left:306px">74.0 %</div><div class="c" style="left:406px">53.5 %</div><div class="c" style="left:506px">99.3 %</div><div class="c" style="left:606px">65.2 %</div></div><div class="r" style="top:294px"><div class="bg" style="left:49px;background:#efefef"></div><div class="ln" style="left:29px"></div><svg style="left:31px;top:2px" width="17" height="17" viewBox="0 0 17 17"><path d="M13.2,4.1A6.3,6.3 0 1 0 14.7,8.6" fill="none" stroke="#34344e" stroke-width="1.3"/><path d="M10.8,4.7L14.6,5.0L14.3,1.5Z" fill="#34344e"/><path d="M8.0,4.6V9.0L10.2,11.0" fill="none" stroke="#34344e" stroke-width="1.3"/></svg><div class="nm" style="left:51px">Total CPU Usage</div><div class="c hl" style="left:306px">36.2 %</div><div class="c" style="left:406px">19.4 %</div><div class="c" style="left:506px">38.4 %</div><div class="c" style="left:606px">25.2 %</div></div><div class="r" style="top:315px"></div><div class="r g" style="top:336px"><div class="bg" style="left:49px;background:#dddddd;height:21px"></div><svg style="left:7px;top:5px" width="18" height="10" viewBox="0 0 18 10"><path d="M1,1L9,8.6L17,1" fill="none" stroke="#585874" stroke-width="1.3"/></svg><svg style="left:31px;top:1px" width="16" height="19" viewBox="0 0 16 19"><rect x="0.8" y="3.2" width="2.4" height="1.6" fill="#8c8c90"/><rect x="12.8" y="3.2" width="2.4" height="1.6" fill="#8c8c90"/><rect x="0.8" y="7.1" width="2.4" height="1.6" fill="#8c8c90"/><rect x="12.8" y="7.1" width="2.4" height="1.6" fill="#8c8c90"/><rect x="0.8" y="11.0" width="2.4" height="1.6" fill="#8c8c90"/><rect x="12.8" y="11.0" width="2.4" height="1.6" fill="#8c8c90"/><rect x="0.8" y="14.9" width="2.4" height="1.6" fill="#8c8c90"/><rect x="12.8" y="14.9" width="2.4" height="1.6" fill="#8c8c90"/><rect x="3" y="0.8" width="10" height="17.2" fill="#6a6888"/><rect x="3" y="8.5" width="10" height="3.5" fill="#4c587a"/><rect x="3" y="12" width="10" height="5.2" fill="#1e4058"/><rect x="3" y="17.2" width="10" height="0.8" fill="#5a5a84"/><rect x="6.8" y="0.8" width="2.4" height="1" fill="#c8c8c0"/><rect x="4.2" y="1.8" width="1.2" height="1.2" fill="#b8b8b4"/><rect x="10.6" y="1.8" width="1.2" height="1.2" fill="#b8b8b4"/><rect x="7" y="14.5" width="1.3" height="1.3" fill="#900000"/><rect x="11" y="14.5" width="1.3" height="1.3" fill="#900000"/><rect x="3" y="15.6" width="1.2" height="1.2" fill="#900000"/><rect x="5" y="16.9" width="1.4" height="1.1" fill="#e09020"/><rect x="8" y="16.9" width="1.4" height="1.1" fill="#e09020"/></svg><div class="nm" style="left:51px">CPU [#0]: Intel Core Ultra 9 275HX: Enhanced</div></div><div class="r" style="top:357px"><div class="ln" style="left:29px"></div><svg style="left:34px;top:1px" width="9" height="20" viewBox="0 0.5 9 20"><rect x="3.2" y="0.6" width="2.8" height="14" rx="1.4" fill="#d8d8dc"/><rect x="3.5" y="5.8" width="2.2" height="10" fill="#7c0000"/><rect x="3.5" y="6.2" width="0.7" height="7.5" fill="#e49a30" opacity="0.55"/><circle cx="4.6" cy="15.6" r="2.7" fill="#7c0000"/><circle cx="4.4" cy="15.2" r="0.7" fill="#f0a840"/></svg><div class="nm" style="left:51px">CPU Package</div><div class="c hl" style="left:306px">80 °C</div><div class="c" style="left:406px">77 °C</div><div class="c" style="left:506px">90 °C</div><div class="c" style="left:606px">80 °C</div></div><div class="r" style="top:378px"><div class="bg" style="left:49px;background:#efefef"></div><div class="ln" style="left:29px"></div><svg style="left:34px;top:1px" width="9" height="20" viewBox="0 0.5 9 20"><rect x="3.2" y="0.6" width="2.8" height="14" rx="1.4" fill="#d8d8dc"/><rect x="3.5" y="5.8" width="2.2" height="10" fill="#7c0000"/><rect x="3.5" y="6.2" width="0.7" height="7.5" fill="#e49a30" opacity="0.55"/><circle cx="4.6" cy="15.6" r="2.7" fill="#7c0000"/><circle cx="4.4" cy="15.2" r="0.7" fill="#f0a840"/></svg><div class="nm" style="left:51px">CPU IA Cores</div><div class="c hl" style="left:306px">80 °C</div><div class="c" style="left:406px">77 °C</div><div class="c" style="left:506px">90 °C</div><div class="c" style="left:606px">80 °C</div></div><div class="r" style="top:399px"><div class="ln" style="left:29px"></div><svg style="left:34px;top:1px" width="9" height="20" viewBox="0 0.5 9 20"><rect x="3.2" y="0.6" width="2.8" height="14" rx="1.4" fill="#d8d8dc"/><rect x="3.5" y="5.8" width="2.2" height="10" fill="#7c0000"/><rect x="3.5" y="6.2" width="0.7" height="7.5" fill="#e49a30" opacity="0.55"/><circle cx="4.6" cy="15.6" r="2.7" fill="#7c0000"/><circle cx="4.4" cy="15.2" r="0.7" fill="#f0a840"/></svg><div class="nm" style="left:51px">CPU GT Cores (Graphics)</div><div class="c" style="left:306px">71 °C</div><div class="c" style="left:406px">70 °C</div><div class="c" style="left:506px">73 °C</div><div class="c" style="left:606px">71 °C</div></div><div class="r" style="top:420px"><div class="bg" style="left:69px;background:#efefef"></div><div class="ln" style="left:49px"></div><svg style="left:32px;top:1px" width="10" height="18" viewBox="0 0 10 18"><path d="M1,1.2L8.6,9L1,16.8" fill="none" stroke="#585874" stroke-width="1.25"/></svg><svg style="left:53px;top:0px" width="13" height="21" viewBox="0 0 13 21"><path d="M4.2,0.3L11.0,0.3L7.6,6.3L11.4,6.3L0.6,20.3L4.6,9.6L1.0,9.6Z" fill="#f1a93e"/></svg><div class="nm" style="left:71px">Voltage Offsets</div><div class="c" style="left:406px">0.000 V</div><div class="c" style="left:506px">0.000 V</div></div><div class="r" style="top:441px"><div class="ln" style="left:29px"></div><svg style="left:33px;top:0px" width="13" height="21" viewBox="0 0 13 21"><path d="M4.2,0.3L11.0,0.3L7.6,6.3L11.4,6.3L0.6,20.3L4.6,9.6L1.0,9.6Z" fill="#f1a93e"/></svg><div class="nm" style="left:51px">VR VCC Current (SVID IOUT)</div><div class="c hl" style="left:306px">20.625 A</div><div class="c" style="left:406px">0.000 A</div><div class="c" style="left:506px">67.032 A</div><div class="c" style="left:606px">22.213 A</div></div><div class="r" style="top:462px"><div class="bg" style="left:49px;background:#efefef"></div><div class="ln" style="left:29px"></div><svg style="left:33px;top:0px" width="13" height="21" viewBox="0 0 13 21"><path d="M4.2,0.3L11.0,0.3L7.6,6.3L11.4,6.3L0.6,20.3L4.6,9.6L1.0,9.6Z" fill="#f1a93e"/></svg><div class="nm" style="left:51px">CPU Package Power</div><div class="c hl" style="left:306px">30.191 W</div><div class="c" style="left:406px">26.776 W</div><div class="c" style="left:506px">60.356 W</div><div class="c" style="left:606px">30.126 W</div></div><div class="r" style="top:483px"><div class="ln" style="left:29px"></div><svg style="left:33px;top:0px" width="13" height="21" viewBox="0 0 13 21"><path d="M4.2,0.3L11.0,0.3L7.6,6.3L11.4,6.3L0.6,20.3L4.6,9.6L1.0,9.6Z" fill="#f1a93e"/></svg><div class="nm" style="left:51px">IA Cores Power</div><div class="c hl" style="left:306px">22.379 W</div><div class="c" style="left:406px">18.295 W</div><div class="c" style="left:506px">52.249 W</div><div class="c" style="left:606px">22.285 W</div></div><div class="r" style="top:504px"><div class="bg" style="left:49px;background:#efefef"></div><div class="ln" style="left:29px"></div><svg style="left:33px;top:0px" width="13" height="21" viewBox="0 0 13 21"><path d="M4.2,0.3L11.0,0.3L7.6,6.3L11.4,6.3L0.6,20.3L4.6,9.6L1.0,9.6Z" fill="#f1a93e"/></svg><div class="nm" style="left:51px">GT Cores Power</div><div class="c" style="left:306px">0.000 W</div><div class="c" style="left:406px">0.000 W</div><div class="c" style="left:506px">0.000 W</div><div class="c" style="left:606px">0.000 W</div></div><div class="r" style="top:525px"><div class="ln" style="left:29px"></div><svg style="left:33px;top:0px" width="13" height="21" viewBox="0 0 13 21"><path d="M4.2,0.3L11.0,0.3L7.6,6.3L11.4,6.3L0.6,20.3L4.6,9.6L1.0,9.6Z" fill="#f1a93e"/></svg><div class="nm" style="left:51px">System Agent Power</div><div class="c hl" style="left:306px">3.347 W</div><div class="c" style="left:406px">3.000 W</div><div class="c" style="left:506px">3.605 W</div><div class="c" style="left:606px">3.349 W</div></div><div class="r" style="top:546px"><div class="bg" style="left:49px;background:#efefef"></div><div class="ln" style="left:29px"></div><svg style="left:33px;top:0px" width="13" height="21" viewBox="0 0 13 21"><path d="M4.2,0.3L11.0,0.3L7.6,6.3L11.4,6.3L0.6,20.3L4.6,9.6L1.0,9.6Z" fill="#f1a93e"/></svg><div class="nm" style="left:51px">Rest-of-Chip Power</div><div class="c" style="left:306px">0.000 W</div><div class="c" style="left:406px">0.000 W</div><div class="c" style="left:506px">0.004 W</div><div class="c" style="left:606px">0.000 W</div></div><div class="r" style="top:567px"><div class="ln" style="left:29px"></div><svg style="left:33px;top:0px" width="13" height="21" viewBox="0 0 13 21"><path d="M4.2,0.3L11.0,0.3L7.6,6.3L11.4,6.3L0.6,20.3L4.6,9.6L1.0,9.6Z" fill="#f1a93e"/></svg><div class="nm" style="left:51px">PCH Power</div><div class="c" style="left:306px">0.000 W</div><div class="c" style="left:406px">0.000 W</div><div class="c" style="left:506px">0.011 W</div><div class="c" style="left:606px">0.000 W</div></div><div class="r" style="top:588px"><div class="bg" style="left:49px;background:#efefef"></div><div class="ln" style="left:29px"></div><svg style="left:33px;top:0px" width="13" height="21" viewBox="0 0 13 21"><path d="M4.2,0.3L11.0,0.3L7.6,6.3L11.4,6.3L0.6,20.3L4.6,9.6L1.0,9.6Z" fill="#f1a93e"/></svg><div class="nm" style="left:51px">PL1 Power Limit (Static)</div><div class="c" style="left:306px">175.0 W</div><div class="c" style="left:406px">175.0 W</div><div class="c" style="left:506px">175.0 W</div><div class="c" style="left:606px">175.0 W</div></div><div class="r" style="top:609px"><div class="ln" style="left:29px"></div><svg style="left:33px;top:0px" width="13" height="21" viewBox="0 0 13 21"><path d="M4.2,0.3L11.0,0.3L7.6,6.3L11.4,6.3L0.6,20.3L4.6,9.6L1.0,9.6Z" fill="#f1a93e"/></svg><div class="nm" style="left:51px">PL1 Power Limit (Dynamic)</div><div class="c" style="left:306px">30.0 W</div><div class="c" style="left:406px">30.0 W</div><div class="c" style="left:506px">50.0 W</div><div class="c" style="left:606px">30.0 W</div></div><div class="r" style="top:630px"><div class="bg" style="left:49px;background:#efefef"></div><div class="ln" style="left:29px"></div><svg style="left:33px;top:0px" width="13" height="21" viewBox="0 0 13 21"><path d="M4.2,0.3L11.0,0.3L7.6,6.3L11.4,6.3L0.6,20.3L4.6,9.6L1.0,9.6Z" fill="#f1a93e"/></svg><div class="nm" style="left:51px">PL2 Power Limit (Static)</div><div class="c" style="left:306px">175.0 W</div><div class="c" style="left:406px">175.0 W</div><div class="c" style="left:506px">175.0 W</div><div class="c" style="left:606px">175.0 W</div></div><div class="r" style="top:651px"><div class="ln" style="left:29px"></div><svg style="left:33px;top:0px" width="13" height="21" viewBox="0 0 13 21"><path d="M4.2,0.3L11.0,0.3L7.6,6.3L11.4,6.3L0.6,20.3L4.6,9.6L1.0,9.6Z" fill="#f1a93e"/></svg><div class="nm" style="left:51px">PL2 Power Limit (Dynamic)</div><div class="c" style="left:306px">175.0 W</div><div class="c" style="left:406px">175.0 W</div><div class="c" style="left:506px">175.0 W</div><div class="c" style="left:606px">175.0 W</div></div><div class="r" style="top:672px"><div class="bg" style="left:49px;background:#efefef"></div><div class="ln" style="left:29px"></div><svg style="left:31px;top:2px" width="17" height="17" viewBox="0 0 17 17"><path d="M13.2,4.1A6.3,6.3 0 1 0 14.7,8.6" fill="none" stroke="#34344e" stroke-width="1.3"/><path d="M10.8,4.7L14.6,5.0L14.3,1.5Z" fill="#34344e"/><path d="M8.0,4.6V9.0L10.2,11.0" fill="none" stroke="#34344e" stroke-width="1.3"/></svg><div class="nm" style="left:51px">GPU Clock</div><div class="c hl" style="left:306px">1,646.0 MHz</div><div class="c" style="left:406px">1,645.6 MHz</div><div class="c" style="left:506px">1,646.5 MHz</div><div class="c" style="left:606px">1,646.0 MHz</div></div><div class="r" style="top:693px"><div class="ln" style="left:29px"></div><svg style="left:31px;top:2px" width="17" height="17" viewBox="0 0 17 17"><path d="M13.2,4.1A6.3,6.3 0 1 0 14.7,8.6" fill="none" stroke="#34344e" stroke-width="1.3"/><path d="M10.8,4.7L14.6,5.0L14.3,1.5Z" fill="#34344e"/><path d="M8.0,4.6V9.0L10.2,11.0" fill="none" stroke="#34344e" stroke-width="1.3"/></svg><div class="nm" style="left:51px">GPU D3D Usage</div><div class="c" style="left:306px">0.0 %</div><div class="c" style="left:406px">0.0 %</div><div class="c" style="left:506px">0.0 %</div><div class="c" style="left:606px">0.0 %</div></div><div class="r" style="top:714px"><div class="bg" style="left:49px;background:#efefef;height:21px"></div></div><div class="r g" style="top:735px"><div class="bg" style="left:49px;background:#dddddd;height:21px"></div><svg style="left:7px;top:5px" width="18" height="10" viewBox="0 0 18 10"><path d="M1,1L9,8.6L17,1" fill="none" stroke="#585874" stroke-width="1.3"/></svg><svg style="left:31px;top:1px" width="16" height="19" viewBox="0 0 16 19"><rect x="0.8" y="3.2" width="2.4" height="1.6" fill="#8c8c90"/><rect x="12.8" y="3.2" width="2.4" height="1.6" fill="#8c8c90"/><rect x="0.8" y="7.1" width="2.4" height="1.6" fill="#8c8c90"/><rect x="12.8" y="7.1" width="2.4" height="1.6" fill="#8c8c90"/><rect x="0.8" y="11.0" width="2.4" height="1.6" fill="#8c8c90"/><rect x="12.8" y="11.0" width="2.4" height="1.6" fill="#8c8c90"/><rect x="0.8" y="14.9" width="2.4" height="1.6" fill="#8c8c90"/><rect x="12.8" y="14.9" width="2.4" height="1.6" fill="#8c8c90"/><rect x="3" y="0.8" width="10" height="17.2" fill="#6a6888"/><rect x="3" y="8.5" width="10" height="3.5" fill="#4c587a"/><rect x="3" y="12" width="10" height="5.2" fill="#1e4058"/><rect x="3" y="17.2" width="10" height="0.8" fill="#5a5a84"/><rect x="6.8" y="0.8" width="2.4" height="1" fill="#c8c8c0"/><rect x="4.2" y="1.8" width="1.2" height="1.2" fill="#b8b8b4"/><rect x="10.6" y="1.8" width="1.2" height="1.2" fill="#b8b8b4"/><rect x="7" y="14.5" width="1.3" height="1.3" fill="#900000"/><rect x="11" y="14.5" width="1.3" height="1.3" fill="#900000"/><rect x="3" y="15.6" width="1.2" height="1.2" fill="#900000"/><rect x="5" y="16.9" width="1.4" height="1.1" fill="#e09020"/><rect x="8" y="16.9" width="1.4" height="1.1" fill="#e09020"/></svg><div class="nm" style="left:51px">GPU [#2]: NVIDIA GeForce RTX 5090 Laptop</div></div><div class="r" style="top:756px"><div class="bg" style="left:49px;background:#efefef"></div><div class="ln" style="left:29px"></div><svg style="left:34px;top:1px" width="9" height="20" viewBox="0 0.5 9 20"><rect x="3.2" y="0.6" width="2.8" height="14" rx="1.4" fill="#d8d8dc"/><rect x="3.5" y="5.8" width="2.2" height="10" fill="#7c0000"/><rect x="3.5" y="6.2" width="0.7" height="7.5" fill="#e49a30" opacity="0.55"/><circle cx="4.6" cy="15.6" r="2.7" fill="#7c0000"/><circle cx="4.4" cy="15.2" r="0.7" fill="#f0a840"/></svg><div class="nm" style="left:51px">GPU Temperature</div><div class="c hl" style="left:306px">74.7 °C</div><div class="c" style="left:406px">72.6 °C</div><div class="c" style="left:506px">75.5 °C</div><div class="c" style="left:606px">74.3 °C</div></div><div class="r" style="top:777px"><div class="ln" style="left:29px"></div><svg style="left:34px;top:1px" width="9" height="20" viewBox="0 0.5 9 20"><rect x="3.2" y="0.6" width="2.8" height="14" rx="1.4" fill="#d8d8dc"/><rect x="3.5" y="5.8" width="2.2" height="10" fill="#7c0000"/><rect x="3.5" y="6.2" width="0.7" height="7.5" fill="#e49a30" opacity="0.55"/><circle cx="4.6" cy="15.6" r="2.7" fill="#7c0000"/><circle cx="4.4" cy="15.2" r="0.7" fill="#f0a840"/></svg><div class="nm" style="left:51px">GPU Memory Junction Temperature</div><div class="c" style="left:306px">74.0 °C</div><div class="c" style="left:406px">74.0 °C</div><div class="c" style="left:506px">78.0 °C</div><div class="c" style="left:606px">74.0 °C</div></div><div class="r" style="top:798px"><div class="bg" style="left:49px;background:#efefef"></div><div class="ln" style="left:29px"></div><svg style="left:34px;top:1px" width="9" height="20" viewBox="0 0.5 9 20"><rect x="3.2" y="0.6" width="2.8" height="14" rx="1.4" fill="#d8d8dc"/><rect x="3.5" y="5.8" width="2.2" height="10" fill="#7c0000"/><rect x="3.5" y="6.2" width="0.7" height="7.5" fill="#e49a30" opacity="0.55"/><circle cx="4.6" cy="15.6" r="2.7" fill="#7c0000"/><circle cx="4.4" cy="15.2" r="0.7" fill="#f0a840"/></svg><div class="nm" style="left:51px">GPU Thermal Limit</div><div class="c" style="left:306px">75.0 °C</div><div class="c" style="left:406px">75.0 °C</div><div class="c" style="left:506px">75.0 °C</div><div class="c" style="left:606px">75.0 °C</div></div><div class="r" style="top:819px"><div class="ln" style="left:29px"></div><svg style="left:33px;top:0px" width="13" height="21" viewBox="0 0 13 21"><path d="M4.2,0.3L11.0,0.3L7.6,6.3L11.4,6.3L0.6,20.3L4.6,9.6L1.0,9.6Z" fill="#f1a93e"/></svg><div class="nm" style="left:51px">GPU Core Voltage</div><div class="c hl" style="left:306px">0.755 V</div><div class="c" style="left:406px">0.615 V</div><div class="c" style="left:506px">0.765 V</div><div class="c" style="left:606px">0.732 V</div></div><div class="r" style="top:840px"><div class="bg" style="left:69px;background:#efefef"></div><div class="ln" style="left:49px"></div><svg style="left:32px;top:1px" width="10" height="18" viewBox="0 0 10 18"><path d="M1,1.2L8.6,9L1,16.8" fill="none" stroke="#585874" stroke-width="1.25"/></svg><svg style="left:53px;top:0px" width="13" height="21" viewBox="0 0 13 21"><path d="M4.2,0.3L11.0,0.3L7.6,6.3L11.4,6.3L0.6,20.3L4.6,9.6L1.0,9.6Z" fill="#f1a93e"/></svg><div class="nm" style="left:71px">GPU Rail Voltages</div><div class="c" style="left:406px">0.650 V</div><div class="c" style="left:506px">19.560 V</div></div><div class="r" style="top:861px"><div class="ln" style="left:29px"></div><svg style="left:33px;top:0px" width="13" height="21" viewBox="0 0 13 21"><path d="M4.2,0.3L11.0,0.3L7.6,6.3L11.4,6.3L0.6,20.3L4.6,9.6L1.0,9.6Z" fill="#f1a93e"/></svg><div class="nm" style="left:51px">GPU Power (Total)</div><div class="c hl" style="left:306px">105.435 W</div><div class="c" style="left:406px">71.897 W</div><div class="c" style="left:506px">117.861 W</div><div class="c" style="left:606px">107.747 W</div></div><div class="r" style="top:882px"><div class="bg" style="left:69px;background:#efefef"></div><div class="ln" style="left:49px"></div><svg style="left:32px;top:1px" width="10" height="18" viewBox="0 0 10 18"><path d="M1,1.2L8.6,9L1,16.8" fill="none" stroke="#585874" stroke-width="1.25"/></svg><svg style="left:53px;top:0px" width="13" height="21" viewBox="0 0 13 21"><path d="M4.2,0.3L11.0,0.3L7.6,6.3L11.4,6.3L0.6,20.3L4.6,9.6L1.0,9.6Z" fill="#f1a93e"/></svg><div class="nm" style="left:71px">GPU Rail Powers</div><div class="c" style="left:406px">2.138 W</div><div class="c" style="left:506px">111.035 W</div></div><div class="r" style="top:903px"><div class="ln" style="left:29px"></div><svg style="left:31px;top:2px" width="17" height="17" viewBox="0 0 17 17"><path d="M13.2,4.1A6.3,6.3 0 1 0 14.7,8.6" fill="none" stroke="#34344e" stroke-width="1.3"/><path d="M10.8,4.7L14.6,5.0L14.3,1.5Z" fill="#34344e"/><path d="M8.0,4.6V9.0L10.2,11.0" fill="none" stroke="#34344e" stroke-width="1.3"/></svg><div class="nm" style="left:51px">GPU Clock</div><div class="c hl" style="left:306px">1,807.0 MHz</div><div class="c" style="left:406px">1,005.0 MHz</div><div class="c" style="left:506px">1,807.0 MHz</div><div class="c" style="left:606px">1,668.0 MHz</div></div><div class="r" style="top:924px"><div class="bg" style="left:49px;background:#efefef"></div><div class="ln" style="left:29px"></div><svg style="left:31px;top:2px" width="17" height="17" viewBox="0 0 17 17"><path d="M13.2,4.1A6.3,6.3 0 1 0 14.7,8.6" fill="none" stroke="#34344e" stroke-width="1.3"/><path d="M10.8,4.7L14.6,5.0L14.3,1.5Z" fill="#34344e"/><path d="M8.0,4.6V9.0L10.2,11.0" fill="none" stroke="#34344e" stroke-width="1.3"/></svg><div class="nm" style="left:51px">GPU Memory Clock</div><div class="c" style="left:306px">1,375.1 MHz</div><div class="c" style="left:406px">1,375.1 MHz</div><div class="c" style="left:506px">1,750.1 MHz</div><div class="c" style="left:606px">1,375.8 MHz</div></div><div class="r" style="top:945px"><div class="ln" style="left:29px"></div><svg style="left:31px;top:2px" width="17" height="17" viewBox="0 0 17 17"><path d="M13.2,4.1A6.3,6.3 0 1 0 14.7,8.6" fill="none" stroke="#34344e" stroke-width="1.3"/><path d="M10.8,4.7L14.6,5.0L14.3,1.5Z" fill="#34344e"/><path d="M8.0,4.6V9.0L10.2,11.0" fill="none" stroke="#34344e" stroke-width="1.3"/></svg><div class="nm" style="left:51px">GPU Video Clock</div><div class="c hl" style="left:306px">1,620.0 MHz</div><div class="c" style="left:406px">1,260.0 MHz</div><div class="c" style="left:506px">1,620.0 MHz</div><div class="c" style="left:606px">1,507.6 MHz</div></div><div class="r" style="top:966px"><div class="bg" style="left:49px;background:#efefef"></div><div class="ln" style="left:29px"></div><svg style="left:31px;top:2px" width="17" height="17" viewBox="0 0 17 17"><path d="M13.2,4.1A6.3,6.3 0 1 0 14.7,8.6" fill="none" stroke="#34344e" stroke-width="1.3"/><path d="M10.8,4.7L14.6,5.0L14.3,1.5Z" fill="#34344e"/><path d="M8.0,4.6V9.0L10.2,11.0" fill="none" stroke="#34344e" stroke-width="1.3"/></svg><div class="nm" style="left:51px">GPU Effective Clock</div><div class="c hl" style="left:306px">1,631.2 MHz</div><div class="c" style="left:406px">1,357.7 MHz</div><div class="c" style="left:506px">1,766.5 MHz</div><div class="c" style="left:606px">1,669.9 MHz</div></div><div class="r" style="top:987px"><div class="ln" style="left:29px"></div><svg style="left:31px;top:2px" width="17" height="17" viewBox="0 0 17 17"><path d="M13.2,4.1A6.3,6.3 0 1 0 14.7,8.6" fill="none" stroke="#34344e" stroke-width="1.3"/><path d="M10.8,4.7L14.6,5.0L14.3,1.5Z" fill="#34344e"/><path d="M8.0,4.6V9.0L10.2,11.0" fill="none" stroke="#34344e" stroke-width="1.3"/></svg><div class="nm" style="left:51px">GPU Crossbar Clock</div><div class="c hl" style="left:306px">1,665.0 MHz</div><div class="c" style="left:406px">1,305.0 MHz</div><div class="c" style="left:506px">1,665.0 MHz</div><div class="c" style="left:606px">1,533.6 MHz</div></div><div class="r" style="top:1008px"><div class="bg" style="left:49px;background:#efefef"></div><div class="ln" style="left:29px"></div><svg style="left:31px;top:2px" width="17" height="17" viewBox="0 0 17 17"><path d="M13.2,4.1A6.3,6.3 0 1 0 14.7,8.6" fill="none" stroke="#34344e" stroke-width="1.3"/><path d="M10.8,4.7L14.6,5.0L14.3,1.5Z" fill="#34344e"/><path d="M8.0,4.6V9.0L10.2,11.0" fill="none" stroke="#34344e" stroke-width="1.3"/></svg><div class="nm" style="left:51px">GPU Core Load</div><div class="c hl" style="left:306px">97.0 %</div><div class="c" style="left:406px">94.0 %</div><div class="c" style="left:506px">98.0 %</div><div class="c" style="left:606px">97.8 %</div></div><div class="r" style="top:1029px"><div class="ln" style="left:29px"></div><svg style="left:31px;top:2px" width="17" height="17" viewBox="0 0 17 17"><path d="M13.2,4.1A6.3,6.3 0 1 0 14.7,8.6" fill="none" stroke="#34344e" stroke-width="1.3"/><path d="M10.8,4.7L14.6,5.0L14.3,1.5Z" fill="#34344e"/><path d="M8.0,4.6V9.0L10.2,11.0" fill="none" stroke="#34344e" stroke-width="1.3"/></svg><div class="nm" style="left:51px">GPU Memory Controller Load</div><div class="c hl" style="left:306px">28.0 %</div><div class="c" style="left:406px">16.0 %</div><div class="c" style="left:506px">33.0 %</div><div class="c" style="left:606px">30.5 %</div></div><div class="r" style="top:1050px"><div class="bg" style="left:49px;background:#efefef"></div><div class="ln" style="left:29px"></div><svg style="left:31px;top:2px" width="17" height="17" viewBox="0 0 17 17"><path d="M13.2,4.1A6.3,6.3 0 1 0 14.7,8.6" fill="none" stroke="#34344e" stroke-width="1.3"/><path d="M10.8,4.7L14.6,5.0L14.3,1.5Z" fill="#34344e"/><path d="M8.0,4.6V9.0L10.2,11.0" fill="none" stroke="#34344e" stroke-width="1.3"/></svg><div class="nm" style="left:51px">GPU Video Engine Load</div><div class="c" style="left:306px">0.0 %</div><div class="c" style="left:406px">0.0 %</div><div class="c" style="left:506px">0.0 %</div><div class="c" style="left:606px">0.0 %</div></div><div class="r" style="top:1071px"><div class="ln" style="left:29px"></div><svg style="left:31px;top:2px" width="17" height="17" viewBox="0 0 17 17"><path d="M13.2,4.1A6.3,6.3 0 1 0 14.7,8.6" fill="none" stroke="#34344e" stroke-width="1.3"/><path d="M10.8,4.7L14.6,5.0L14.3,1.5Z" fill="#34344e"/><path d="M8.0,4.6V9.0L10.2,11.0" fill="none" stroke="#34344e" stroke-width="1.3"/></svg><div class="nm" style="left:51px">GPU Bus Load</div><div class="c" style="left:306px">100.0 %</div><div class="c" style="left:406px">70.0 %</div><div class="c" style="left:506px">100.0 %</div><div class="c" style="left:606px">99.5 %</div></div><div class="r" style="top:1092px"><div class="bg" style="left:49px;background:#efefef"></div><div class="ln" style="left:29px"></div><svg style="left:31px;top:2px" width="17" height="17" viewBox="0 0 17 17"><path d="M13.2,4.1A6.3,6.3 0 1 0 14.7,8.6" fill="none" stroke="#34344e" stroke-width="1.3"/><path d="M10.8,4.7L14.6,5.0L14.3,1.5Z" fill="#34344e"/><path d="M8.0,4.6V9.0L10.2,11.0" fill="none" stroke="#34344e" stroke-width="1.3"/></svg><div class="nm" style="left:51px">GPU Memory Usage</div><div class="c hl" style="left:306px">34.9 %</div><div class="c" style="left:406px">33.6 %</div><div class="c" style="left:506px">35.5 %</div><div class="c" style="left:606px">34.7 %</div></div><div class="r" style="top:1113px"></div><div class="r g" style="top:1134px"><div class="bg" style="left:49px;background:#dddddd;height:21px"></div><svg style="left:7px;top:5px" width="18" height="10" viewBox="0 0 18 10"><path d="M1,1L9,8.6L17,1" fill="none" stroke="#585874" stroke-width="1.3"/></svg><svg style="left:31px;top:1px" width="16" height="19" viewBox="0 0 16 19"><rect x="0.8" y="3.2" width="2.4" height="1.6" fill="#8c8c90"/><rect x="12.8" y="3.2" width="2.4" height="1.6" fill="#8c8c90"/><rect x="0.8" y="7.1" width="2.4" height="1.6" fill="#8c8c90"/><rect x="12.8" y="7.1" width="2.4" height="1.6" fill="#8c8c90"/><rect x="0.8" y="11.0" width="2.4" height="1.6" fill="#8c8c90"/><rect x="12.8" y="11.0" width="2.4" height="1.6" fill="#8c8c90"/><rect x="0.8" y="14.9" width="2.4" height="1.6" fill="#8c8c90"/><rect x="12.8" y="14.9" width="2.4" height="1.6" fill="#8c8c90"/><rect x="3" y="0.8" width="10" height="17.2" fill="#6a6888"/><rect x="3" y="8.5" width="10" height="3.5" fill="#4c587a"/><rect x="3" y="12" width="10" height="5.2" fill="#1e4058"/><rect x="3" y="17.2" width="10" height="0.8" fill="#5a5a84"/><rect x="6.8" y="0.8" width="2.4" height="1" fill="#c8c8c0"/><rect x="4.2" y="1.8" width="1.2" height="1.2" fill="#b8b8b4"/><rect x="10.6" y="1.8" width="1.2" height="1.2" fill="#b8b8b4"/><rect x="7" y="14.5" width="1.3" height="1.3" fill="#900000"/><rect x="11" y="14.5" width="1.3" height="1.3" fill="#900000"/><rect x="3" y="15.6" width="1.2" height="1.2" fill="#900000"/><rect x="5" y="16.9" width="1.4" height="1.1" fill="#e09020"/><rect x="8" y="16.9" width="1.4" height="1.1" fill="#e09020"/></svg><div class="nm" style="left:51px">Battery: AS3GYFG3KC R220358</div></div><div class="r" style="top:1155px"><div class="ln" style="left:29px"></div><svg style="left:33px;top:0px" width="13" height="21" viewBox="0 0 13 21"><path d="M4.2,0.3L11.0,0.3L7.6,6.3L11.4,6.3L0.6,20.3L4.6,9.6L1.0,9.6Z" fill="#f1a93e"/></svg><div class="nm" style="left:51px">Battery Voltage</div><div class="c" style="left:306px">17.512 V</div><div class="c" style="left:406px">17.511 V</div><div class="c" style="left:506px">17.600 V</div><div class="c" style="left:606px">17.536 V</div></div><div class="r" style="top:1176px"><div class="bg" style="left:49px;background:#efefef"></div><div class="ln" style="left:29px"></div><svg style="left:31px;top:2px" width="17" height="17" viewBox="0 0 17 17"><path d="M13.2,4.1A6.3,6.3 0 1 0 14.7,8.6" fill="none" stroke="#34344e" stroke-width="1.3"/><path d="M10.8,4.7L14.6,5.0L14.3,1.5Z" fill="#34344e"/><path d="M8.0,4.6V9.0L10.2,11.0" fill="none" stroke="#34344e" stroke-width="1.3"/></svg><div class="nm" style="left:51px">Remaining Capacity</div><div class="c" style="left:306px">84.518 Wh</div><div class="c" style="left:406px">83.672 Wh</div><div class="c" style="left:506px">84.518 Wh</div><div class="c" style="left:606px">84.304 Wh</div></div><div class="r" style="top:1197px"><div class="ln" style="left:29px"></div><svg style="left:31px;top:2px" width="17" height="17" viewBox="0 0 17 17"><path d="M13.2,4.1A6.3,6.3 0 1 0 14.7,8.6" fill="none" stroke="#34344e" stroke-width="1.3"/><path d="M10.8,4.7L14.6,5.0L14.3,1.5Z" fill="#34344e"/><path d="M8.0,4.6V9.0L10.2,11.0" fill="none" stroke="#34344e" stroke-width="1.3"/></svg><div class="nm" style="left:51px">Charge Level</div><div class="c hl" style="left:306px">100.0 %</div><div class="c" style="left:406px">99.0 %</div><div class="c" style="left:506px">100.0 %</div><div class="c" style="left:606px">99.7 %</div></div><div class="r" style="top:1218px"><div class="bg" style="left:49px;background:#efefef"></div><div class="ln" style="left:29px"></div><svg style="left:31px;top:2px" width="17" height="17" viewBox="0 0 17 17"><path d="M13.2,4.1A6.3,6.3 0 1 0 14.7,8.6" fill="none" stroke="#34344e" stroke-width="1.3"/><path d="M10.8,4.7L14.6,5.0L14.3,1.5Z" fill="#34344e"/><path d="M8.0,4.6V9.0L10.2,11.0" fill="none" stroke="#34344e" stroke-width="1.3"/></svg><div class="nm" style="left:51px">Charge Rate</div><div class="c" style="left:306px">0.000 W</div><div class="c" style="left:406px">0.000 W</div><div class="c" style="left:506px">8.504 W</div><div class="c" style="left:606px">1.505 W</div></div><div class="r" style="top:1239px"><div class="ln" style="left:29px"></div><svg style="left:31px;top:2px" width="17" height="17" viewBox="0 0 17 17"><path d="M13.2,4.1A6.3,6.3 0 1 0 14.7,8.6" fill="none" stroke="#34344e" stroke-width="1.3"/><path d="M10.8,4.7L14.6,5.0L14.3,1.5Z" fill="#34344e"/><path d="M8.0,4.6V9.0L10.2,11.0" fill="none" stroke="#34344e" stroke-width="1.3"/></svg><div class="nm" style="left:51px">Wear Level</div><div class="c" style="left:306px">6.1 %</div><div class="c" style="left:406px">6.1 %</div><div class="c" style="left:506px">6.1 %</div><div class="c" style="left:606px">6.1 %</div></div><div class="r" style="top:1260px"><div class="bg" style="left:49px;background:#efefef;height:21px"></div></div><div class="r g" style="top:1281px"><div class="bg" style="left:49px;background:#dddddd;height:21px"></div><svg style="left:7px;top:5px" width="18" height="10" viewBox="0 0 18 10"><path d="M1,1L9,8.6L17,1" fill="none" stroke="#585874" stroke-width="1.3"/></svg><svg style="left:31px;top:1px" width="16" height="19" viewBox="0 0 16 19"><rect x="0.8" y="3.2" width="2.4" height="1.6" fill="#8c8c90"/><rect x="12.8" y="3.2" width="2.4" height="1.6" fill="#8c8c90"/><rect x="0.8" y="7.1" width="2.4" height="1.6" fill="#8c8c90"/><rect x="12.8" y="7.1" width="2.4" height="1.6" fill="#8c8c90"/><rect x="0.8" y="11.0" width="2.4" height="1.6" fill="#8c8c90"/><rect x="12.8" y="11.0" width="2.4" height="1.6" fill="#8c8c90"/><rect x="0.8" y="14.9" width="2.4" height="1.6" fill="#8c8c90"/><rect x="12.8" y="14.9" width="2.4" height="1.6" fill="#8c8c90"/><rect x="3" y="0.8" width="10" height="17.2" fill="#6a6888"/><rect x="3" y="8.5" width="10" height="3.5" fill="#4c587a"/><rect x="3" y="12" width="10" height="5.2" fill="#1e4058"/><rect x="3" y="17.2" width="10" height="0.8" fill="#5a5a84"/><rect x="6.8" y="0.8" width="2.4" height="1" fill="#c8c8c0"/><rect x="4.2" y="1.8" width="1.2" height="1.2" fill="#b8b8b4"/><rect x="10.6" y="1.8" width="1.2" height="1.2" fill="#b8b8b4"/><rect x="7" y="14.5" width="1.3" height="1.3" fill="#900000"/><rect x="11" y="14.5" width="1.3" height="1.3" fill="#900000"/><rect x="3" y="15.6" width="1.2" height="1.2" fill="#900000"/><rect x="5" y="16.9" width="1.4" height="1.1" fill="#e09020"/><rect x="8" y="16.9" width="1.4" height="1.1" fill="#e09020"/></svg><div class="nm" style="left:51px">RTSS</div></div><div class="r" style="top:1302px"><div class="bg" style="left:49px;background:#efefef"></div><div class="ln" style="left:29px"></div><svg style="left:31px;top:2px" width="17" height="17" viewBox="0 0 17 17"><path d="M13.2,4.1A6.3,6.3 0 1 0 14.7,8.6" fill="none" stroke="#34344e" stroke-width="1.3"/><path d="M10.8,4.7L14.6,5.0L14.3,1.5Z" fill="#34344e"/><path d="M8.0,4.6V9.0L10.2,11.0" fill="none" stroke="#34344e" stroke-width="1.3"/></svg><div class="nm" style="left:51px">Framerate</div><div class="c hl" style="left:306px">49 FPS</div><div class="c" style="left:406px">34 FPS</div><div class="c" style="left:506px">105 FPS</div><div class="c" style="left:606px">95 FPS</div></div><div class="r" style="top:1323px"><div class="ln" style="left:29px"></div><svg style="left:31px;top:2px" width="17" height="17" viewBox="0 0 17 17"><path d="M13.2,4.1A6.3,6.3 0 1 0 14.7,8.6" fill="none" stroke="#34344e" stroke-width="1.3"/><path d="M10.8,4.7L14.6,5.0L14.3,1.5Z" fill="#34344e"/><path d="M8.0,4.6V9.0L10.2,11.0" fill="none" stroke="#34344e" stroke-width="1.3"/></svg><div class="nm" style="left:51px">Framerate 1% Low</div><div class="c" style="left:306px">43 FPS</div><div class="c" style="left:406px">40 FPS</div><div class="c" style="left:506px">54 FPS</div><div class="c" style="left:606px">42 FPS</div></div><div class="r" style="top:1344px"><div class="bg" style="left:49px;background:#efefef"></div><div class="ln" style="left:29px"></div><svg style="left:31px;top:2px" width="17" height="17" viewBox="0 0 17 17"><path d="M13.2,4.1A6.3,6.3 0 1 0 14.7,8.6" fill="none" stroke="#34344e" stroke-width="1.3"/><path d="M10.8,4.7L14.6,5.0L14.3,1.5Z" fill="#34344e"/><path d="M8.0,4.6V9.0L10.2,11.0" fill="none" stroke="#34344e" stroke-width="1.3"/></svg><div class="nm" style="left:51px">Framerate 0.1% Low</div><div class="c" style="left:306px">40 FPS</div><div class="c" style="left:406px">22 FPS</div><div class="c" style="left:506px">41 FPS</div><div class="c" style="left:606px">39 FPS</div></div><div class="r" style="top:1365px"><div class="ln" style="left:29px"></div><svg style="left:31px;top:2px" width="17" height="17" viewBox="0 0 17 17"><path d="M13.2,4.1A6.3,6.3 0 1 0 14.7,8.6" fill="none" stroke="#34344e" stroke-width="1.3"/><path d="M10.8,4.7L14.6,5.0L14.3,1.5Z" fill="#34344e"/><path d="M8.0,4.6V9.0L10.2,11.0" fill="none" stroke="#34344e" stroke-width="1.3"/></svg><div class="nm" style="left:51px">Frame Time</div><div class="c hl" style="left:306px">10.1 ms</div><div class="c" style="left:406px">0.2 ms</div><div class="c" style="left:506px">24.8 ms</div><div class="c" style="left:606px">9.5 ms</div></div></div>
</body></html>
